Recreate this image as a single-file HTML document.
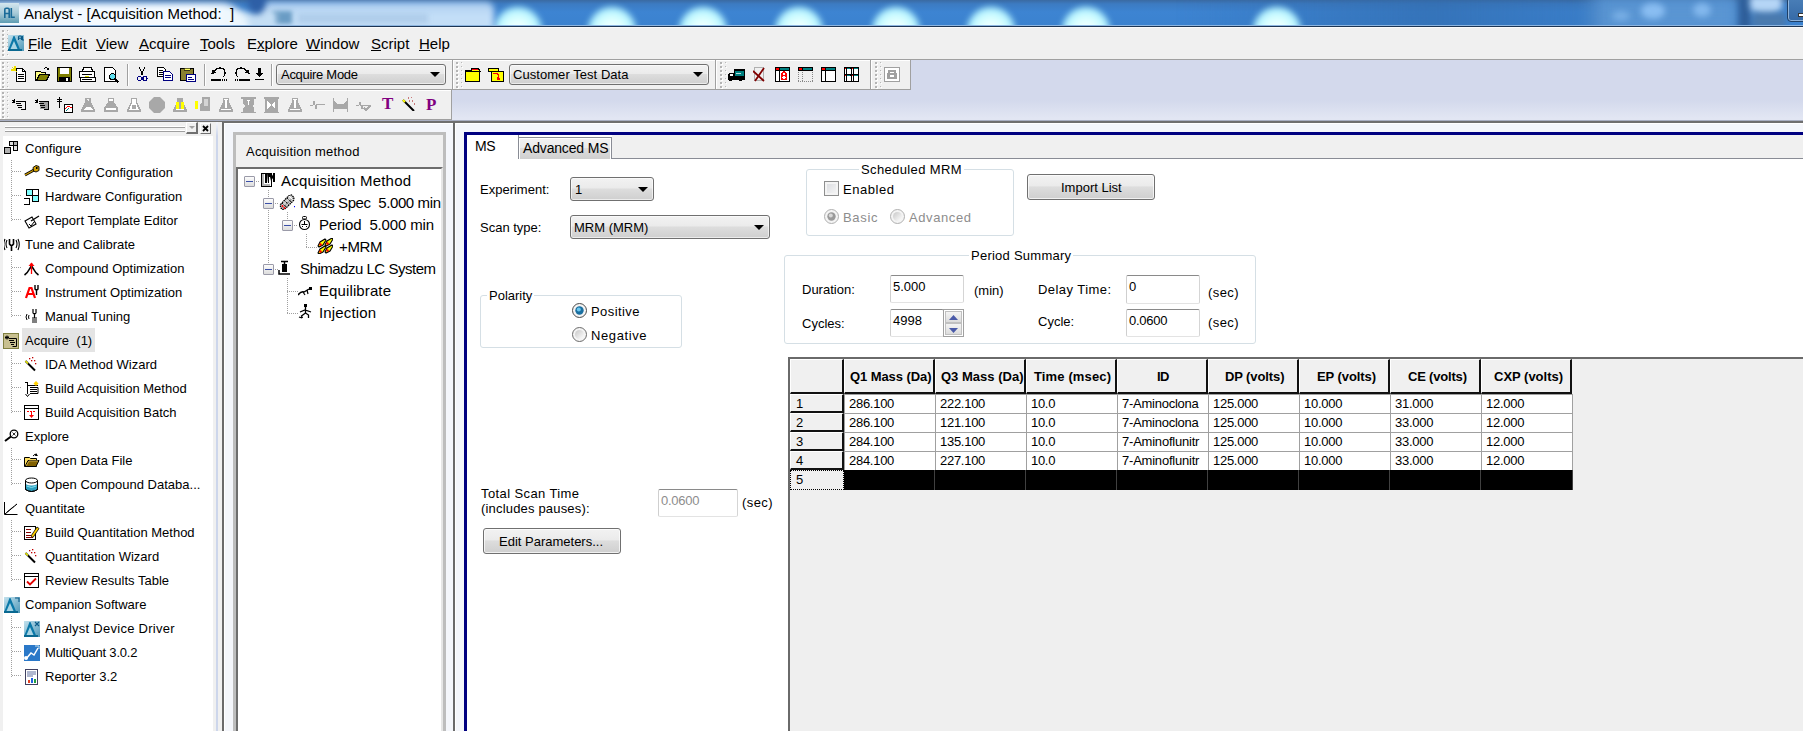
<!DOCTYPE html><html><head><meta charset="utf-8"><style>
html,body{margin:0;padding:0;}
body{width:1803px;height:731px;overflow:hidden;position:relative;background:#f0f0f0;font-family:"Liberation Sans",sans-serif;}
.t{position:absolute;white-space:pre;}
.r{position:absolute;box-sizing:border-box;}
u{text-decoration:underline;text-decoration-thickness:1px;text-underline-offset:1px;}
</style></head><body>
<div class="r" style="left:0;top:0;width:1803px;height:26px;overflow:hidden;background:linear-gradient(#3a6aa2 0px,#3c7bc2 4px,#3d84d2 12px,#3b82cf 25px);">
<div class="r" style="left:1590px;top:-5px;width:150px;height:40px;background:#5a95d2;filter:blur(8px);"></div>
<div class="r" style="left:1180px;top:-5px;width:420px;height:40px;background:linear-gradient(90deg,rgba(48,110,180,0),rgba(48,105,170,.6) 60%,rgba(48,105,170,.2));filter:blur(6px);"></div>
<div class="r" style="left:1738px;top:-5px;width:14px;height:40px;background:#2f5f9a;filter:blur(3px);"></div>
<div class="r" style="left:1750px;top:-4px;width:32px;height:20px;border-radius:0 0 50% 50%;background:#b6d6f6;filter:blur(3px);"></div>
<div class="r" style="left:1752px;top:12px;width:34px;height:16px;background:#4a7aae;filter:blur(3px);"></div>
<div class="r" style="left:1612px;top:11px;width:18px;height:10px;border-radius:50%;background:rgba(150,200,250,0.5);filter:blur(3px);"></div>
<div class="r" style="left:1641px;top:3px;width:24px;height:16px;border-radius:50%;background:rgba(150,200,250,0.8);filter:blur(3px);"></div>
<div class="r" style="left:1693px;top:3px;width:18px;height:14px;border-radius:50%;background:rgba(150,200,250,0.7);filter:blur(3px);"></div>
<div class="r" style="left:494px;top:7px;width:48px;height:30px;border-radius:24px 24px 4px 4px;background:radial-gradient(ellipse at 50% 80%,#ffffff 0%,#d8ffff 40%,#a8eeff 70%,#80c8f8 100%);filter:blur(3px);"></div>
<div class="r" style="left:588px;top:7px;width:48px;height:30px;border-radius:24px 24px 4px 4px;background:radial-gradient(ellipse at 50% 80%,#ffffff 0%,#d8ffff 40%,#a8eeff 70%,#80c8f8 100%);filter:blur(3px);"></div>
<div class="r" style="left:679px;top:7px;width:48px;height:30px;border-radius:24px 24px 4px 4px;background:radial-gradient(ellipse at 50% 80%,#ffffff 0%,#d8ffff 40%,#a8eeff 70%,#80c8f8 100%);filter:blur(3px);"></div>
<div class="r" style="left:775px;top:7px;width:48px;height:30px;border-radius:24px 24px 4px 4px;background:radial-gradient(ellipse at 50% 80%,#ffffff 0%,#d8ffff 40%,#a8eeff 70%,#80c8f8 100%);filter:blur(3px);"></div>
<div class="r" style="left:872px;top:7px;width:48px;height:30px;border-radius:24px 24px 4px 4px;background:radial-gradient(ellipse at 50% 80%,#ffffff 0%,#d8ffff 40%,#a8eeff 70%,#80c8f8 100%);filter:blur(3px);"></div>
<div class="r" style="left:967px;top:7px;width:48px;height:30px;border-radius:24px 24px 4px 4px;background:radial-gradient(ellipse at 50% 80%,#ffffff 0%,#d8ffff 40%,#a8eeff 70%,#80c8f8 100%);filter:blur(3px);"></div>
<div class="r" style="left:1062px;top:7px;width:48px;height:30px;border-radius:24px 24px 4px 4px;background:radial-gradient(ellipse at 50% 80%,#ffffff 0%,#d8ffff 40%,#a8eeff 70%,#80c8f8 100%);filter:blur(3px);"></div>
<div class="r" style="left:1253px;top:7px;width:48px;height:30px;border-radius:24px 24px 4px 4px;background:radial-gradient(ellipse at 50% 80%,#ffffff 0%,#d8ffff 40%,#a8eeff 70%,#80c8f8 100%);filter:blur(3px);"></div>
<div class="r" style="left:258px;top:2px;width:236px;height:34px;border-radius:8px;background:linear-gradient(#aacbee,#c4dff8 40%,#c2def6);filter:blur(3px);"></div>
<div class="r" style="left:272px;top:11px;width:20px;height:13px;background:#6a9cc4;filter:blur(2px);"></div>
<div class="r" style="left:298px;top:14px;width:130px;height:9px;background:rgba(130,165,205,.3);filter:blur(2.5px);"></div>
<div class="r" style="left:236px;top:12px;width:40px;height:20px;background:#c4def4;filter:blur(3px);"></div>
<div class="r" style="left:248px;top:-10px;width:18px;height:24px;border-radius:0 0 50% 50%;background:#2e5fa6;filter:blur(3px);"></div>
<div class="r" style="left:-20px;top:3px;width:270px;height:40px;border-radius:10px 30px 0 0;background:linear-gradient(90deg,#cfe4f4,#f2f9ff 10%,#f6fbff 80%,#e8f4fc);filter:blur(3px);"></div>
<div class="r" style="left:0;top:3px;width:19px;height:20px;background:linear-gradient(#a6cadb,#6aa5c0);"></div>
<div class="r" style="left:0;top:3px;width:19px;height:20px;background:linear-gradient(#d4e6ee,#a8cad8 50%,#5e9cb2);"></div>
<svg class="r" style="left:0;top:0" width="20" height="24" viewBox="0 0 20 24" fill="none"><path d="M4.8 18V9.5q0-1.3 1.3-1.3h1.8q1.3 0 1.3 1.3V18M4.8 13.5h4.4" stroke="#1a6a98" stroke-width="1.6"/><path d="M11.3 8v9.3h3.5" stroke="#1a6a98" stroke-width="1.6"/></svg>
<div class="r" style="left:1787px;top:-3px;width:30px;height:25px;border:1px solid #1e3f66;border-radius:4px;box-shadow:inset 0 0 0 1px rgba(200,225,250,.6);background:linear-gradient(#4a7fb8,#3569a6);"></div>
<div class="r" style="left:1798px;top:13px;width:10px;height:4px;background:#fff;border:1px solid #333;"></div>
</div>
<div class="t" style="left:24px;top:6.30px;font-size:15px;line-height:15px;color:#000;">Analyst - [Acquisition Method:  ]</div>
<div class="r" style="left:0px;top:25px;width:1803px;height:1px;background:#8db5e0;"></div>
<div class="r" style="left:0px;top:26px;width:1803px;height:1px;background:#1d3553;"></div>
<div class="r" style="left:0px;top:27px;width:1803px;height:1px;background:#fafafa;"></div>
<div class="r" style="left:0px;top:28px;width:1803px;height:31px;background:#f0f0f0;"></div>
<div class="r" style="left:0px;top:59px;width:1803px;height:1px;background:#a0a0a0;"></div>
<div class="r" style="left:3px;top:31px;width:2px;height:2px;background:#fff;"></div>
<div class="r" style="left:2px;top:30px;width:2px;height:2px;background:#b4b4b4;"></div>
<div class="r" style="left:8px;top:31px;width:1px;height:1px;background:#fff;"></div>
<div class="r" style="left:7px;top:30px;width:1px;height:1px;background:#b8b8b8;"></div>
<div class="r" style="left:3px;top:35px;width:2px;height:2px;background:#fff;"></div>
<div class="r" style="left:2px;top:34px;width:2px;height:2px;background:#b4b4b4;"></div>
<div class="r" style="left:8px;top:35px;width:1px;height:1px;background:#fff;"></div>
<div class="r" style="left:7px;top:34px;width:1px;height:1px;background:#b8b8b8;"></div>
<div class="r" style="left:3px;top:39px;width:2px;height:2px;background:#fff;"></div>
<div class="r" style="left:2px;top:38px;width:2px;height:2px;background:#b4b4b4;"></div>
<div class="r" style="left:8px;top:39px;width:1px;height:1px;background:#fff;"></div>
<div class="r" style="left:7px;top:38px;width:1px;height:1px;background:#b8b8b8;"></div>
<div class="r" style="left:3px;top:43px;width:2px;height:2px;background:#fff;"></div>
<div class="r" style="left:2px;top:42px;width:2px;height:2px;background:#b4b4b4;"></div>
<div class="r" style="left:8px;top:43px;width:1px;height:1px;background:#fff;"></div>
<div class="r" style="left:7px;top:42px;width:1px;height:1px;background:#b8b8b8;"></div>
<div class="r" style="left:3px;top:47px;width:2px;height:2px;background:#fff;"></div>
<div class="r" style="left:2px;top:46px;width:2px;height:2px;background:#b4b4b4;"></div>
<div class="r" style="left:8px;top:47px;width:1px;height:1px;background:#fff;"></div>
<div class="r" style="left:7px;top:46px;width:1px;height:1px;background:#b8b8b8;"></div>
<div class="r" style="left:3px;top:51px;width:2px;height:2px;background:#fff;"></div>
<div class="r" style="left:2px;top:50px;width:2px;height:2px;background:#b4b4b4;"></div>
<div class="r" style="left:8px;top:51px;width:1px;height:1px;background:#fff;"></div>
<div class="r" style="left:7px;top:50px;width:1px;height:1px;background:#b8b8b8;"></div>
<div class="r" style="left:3px;top:55px;width:2px;height:2px;background:#fff;"></div>
<div class="r" style="left:2px;top:54px;width:2px;height:2px;background:#b4b4b4;"></div>
<div class="r" style="left:8px;top:55px;width:1px;height:1px;background:#fff;"></div>
<div class="r" style="left:7px;top:54px;width:1px;height:1px;background:#b8b8b8;"></div>
<svg class="r" style="left:8px;top:35px;shape-rendering:auto" width="16" height="16" viewBox="0 0 16 16" fill="none" shape-rendering="crispEdges"><defs><linearGradient id="mg" x1="0" y1="0" x2="1" y2="1"><stop offset="0" stop-color="#c4e2ee"/><stop offset="1" stop-color="#4e98b8"/></linearGradient></defs><rect x="0" y="0" width="16" height="16" fill="url(#mg)"/><path d="M0 15.5L5.5 1h1L12.5 15.5z" fill="#0a78a8"/><path d="M2.5 14L6 6l3.5 8z" fill="#a8d4e4"/><rect x="0" y="14" width="14" height="2" fill="#0a6890"/><path d="M10.5 5V2q0-1 1-1h1q1 0 1 1v3M10.5 3.2h3M14.5 1v4h1.5" stroke="#0a5a88" stroke-width="1.1"/></svg>
<div class="t" style="left:28px;top:36.30px;font-size:15px;line-height:15px;color:#000;"><u>F</u>ile</div>
<div class="t" style="left:61px;top:36.30px;font-size:15px;line-height:15px;color:#000;"><u>E</u>dit</div>
<div class="t" style="left:96px;top:36.30px;font-size:15px;line-height:15px;color:#000;"><u>V</u>iew</div>
<div class="t" style="left:139px;top:36.30px;font-size:15px;line-height:15px;color:#000;"><u>A</u>cquire</div>
<div class="t" style="left:200px;top:36.30px;font-size:15px;line-height:15px;color:#000;"><u>T</u>ools</div>
<div class="t" style="left:247px;top:36.30px;font-size:15px;line-height:15px;color:#000;">E<u>x</u>plore</div>
<div class="t" style="left:306px;top:36.30px;font-size:15px;line-height:15px;color:#000;"><u>W</u>indow</div>
<div class="t" style="left:371px;top:36.30px;font-size:15px;line-height:15px;color:#000;"><u>S</u>cript</div>
<div class="t" style="left:419px;top:36.30px;font-size:15px;line-height:15px;color:#000;"><u>H</u>elp</div>
<div class="r" style="left:0px;top:60px;width:1803px;height:60px;background:linear-gradient(#d3d9ec 0px,#d3d9ec 40px,#e2e6f3 58px);"></div>
<div class="r" style="left:0px;top:120px;width:1803px;height:1px;background:#a9afc2;"></div>
<div class="r" style="left:0px;top:121px;width:1803px;height:1px;background:#6f6f6f;"></div>
<div class="r" style="left:0px;top:60px;width:453px;height:30px;background:#f0f0f0;border-right:1px solid #a0a0a0;border-bottom:1px solid #a0a0a0;box-shadow:inset 1px 1px 0 #fff;"></div>
<div class="r" style="left:453px;top:60px;width:263px;height:30px;background:#f0f0f0;border-right:1px solid #a0a0a0;border-bottom:1px solid #a0a0a0;box-shadow:inset 1px 1px 0 #fff;"></div>
<div class="r" style="left:716px;top:60px;width:155px;height:30px;background:#f0f0f0;border-right:1px solid #a0a0a0;border-bottom:1px solid #a0a0a0;box-shadow:inset 1px 1px 0 #fff;"></div>
<div class="r" style="left:871px;top:60px;width:40px;height:30px;background:#f0f0f0;border-right:1px solid #a0a0a0;border-bottom:1px solid #a0a0a0;box-shadow:inset 1px 1px 0 #fff;"></div>
<div class="r" style="left:0px;top:90px;width:452px;height:30px;background:#f0f0f0;border-right:1px solid #a0a0a0;border-bottom:1px solid #a0a0a0;box-shadow:inset 1px 1px 0 #fff;"></div>
<div class="r" style="left:3px;top:63px;width:2px;height:2px;background:#fff;"></div>
<div class="r" style="left:2px;top:62px;width:2px;height:2px;background:#b4b4b4;"></div>
<div class="r" style="left:8px;top:63px;width:1px;height:1px;background:#fff;"></div>
<div class="r" style="left:7px;top:62px;width:1px;height:1px;background:#b8b8b8;"></div>
<div class="r" style="left:3px;top:67px;width:2px;height:2px;background:#fff;"></div>
<div class="r" style="left:2px;top:66px;width:2px;height:2px;background:#b4b4b4;"></div>
<div class="r" style="left:8px;top:67px;width:1px;height:1px;background:#fff;"></div>
<div class="r" style="left:7px;top:66px;width:1px;height:1px;background:#b8b8b8;"></div>
<div class="r" style="left:3px;top:71px;width:2px;height:2px;background:#fff;"></div>
<div class="r" style="left:2px;top:70px;width:2px;height:2px;background:#b4b4b4;"></div>
<div class="r" style="left:8px;top:71px;width:1px;height:1px;background:#fff;"></div>
<div class="r" style="left:7px;top:70px;width:1px;height:1px;background:#b8b8b8;"></div>
<div class="r" style="left:3px;top:75px;width:2px;height:2px;background:#fff;"></div>
<div class="r" style="left:2px;top:74px;width:2px;height:2px;background:#b4b4b4;"></div>
<div class="r" style="left:8px;top:75px;width:1px;height:1px;background:#fff;"></div>
<div class="r" style="left:7px;top:74px;width:1px;height:1px;background:#b8b8b8;"></div>
<div class="r" style="left:3px;top:79px;width:2px;height:2px;background:#fff;"></div>
<div class="r" style="left:2px;top:78px;width:2px;height:2px;background:#b4b4b4;"></div>
<div class="r" style="left:8px;top:79px;width:1px;height:1px;background:#fff;"></div>
<div class="r" style="left:7px;top:78px;width:1px;height:1px;background:#b8b8b8;"></div>
<div class="r" style="left:3px;top:83px;width:2px;height:2px;background:#fff;"></div>
<div class="r" style="left:2px;top:82px;width:2px;height:2px;background:#b4b4b4;"></div>
<div class="r" style="left:8px;top:83px;width:1px;height:1px;background:#fff;"></div>
<div class="r" style="left:7px;top:82px;width:1px;height:1px;background:#b8b8b8;"></div>
<div class="r" style="left:3px;top:87px;width:2px;height:2px;background:#fff;"></div>
<div class="r" style="left:2px;top:86px;width:2px;height:2px;background:#b4b4b4;"></div>
<div class="r" style="left:8px;top:87px;width:1px;height:1px;background:#fff;"></div>
<div class="r" style="left:7px;top:86px;width:1px;height:1px;background:#b8b8b8;"></div>
<div class="r" style="left:457px;top:63px;width:2px;height:2px;background:#fff;"></div>
<div class="r" style="left:456px;top:62px;width:2px;height:2px;background:#b4b4b4;"></div>
<div class="r" style="left:462px;top:63px;width:1px;height:1px;background:#fff;"></div>
<div class="r" style="left:461px;top:62px;width:1px;height:1px;background:#b8b8b8;"></div>
<div class="r" style="left:457px;top:67px;width:2px;height:2px;background:#fff;"></div>
<div class="r" style="left:456px;top:66px;width:2px;height:2px;background:#b4b4b4;"></div>
<div class="r" style="left:462px;top:67px;width:1px;height:1px;background:#fff;"></div>
<div class="r" style="left:461px;top:66px;width:1px;height:1px;background:#b8b8b8;"></div>
<div class="r" style="left:457px;top:71px;width:2px;height:2px;background:#fff;"></div>
<div class="r" style="left:456px;top:70px;width:2px;height:2px;background:#b4b4b4;"></div>
<div class="r" style="left:462px;top:71px;width:1px;height:1px;background:#fff;"></div>
<div class="r" style="left:461px;top:70px;width:1px;height:1px;background:#b8b8b8;"></div>
<div class="r" style="left:457px;top:75px;width:2px;height:2px;background:#fff;"></div>
<div class="r" style="left:456px;top:74px;width:2px;height:2px;background:#b4b4b4;"></div>
<div class="r" style="left:462px;top:75px;width:1px;height:1px;background:#fff;"></div>
<div class="r" style="left:461px;top:74px;width:1px;height:1px;background:#b8b8b8;"></div>
<div class="r" style="left:457px;top:79px;width:2px;height:2px;background:#fff;"></div>
<div class="r" style="left:456px;top:78px;width:2px;height:2px;background:#b4b4b4;"></div>
<div class="r" style="left:462px;top:79px;width:1px;height:1px;background:#fff;"></div>
<div class="r" style="left:461px;top:78px;width:1px;height:1px;background:#b8b8b8;"></div>
<div class="r" style="left:457px;top:83px;width:2px;height:2px;background:#fff;"></div>
<div class="r" style="left:456px;top:82px;width:2px;height:2px;background:#b4b4b4;"></div>
<div class="r" style="left:462px;top:83px;width:1px;height:1px;background:#fff;"></div>
<div class="r" style="left:461px;top:82px;width:1px;height:1px;background:#b8b8b8;"></div>
<div class="r" style="left:457px;top:87px;width:2px;height:2px;background:#fff;"></div>
<div class="r" style="left:456px;top:86px;width:2px;height:2px;background:#b4b4b4;"></div>
<div class="r" style="left:462px;top:87px;width:1px;height:1px;background:#fff;"></div>
<div class="r" style="left:461px;top:86px;width:1px;height:1px;background:#b8b8b8;"></div>
<div class="r" style="left:721px;top:63px;width:2px;height:2px;background:#fff;"></div>
<div class="r" style="left:720px;top:62px;width:2px;height:2px;background:#b4b4b4;"></div>
<div class="r" style="left:726px;top:63px;width:1px;height:1px;background:#fff;"></div>
<div class="r" style="left:725px;top:62px;width:1px;height:1px;background:#b8b8b8;"></div>
<div class="r" style="left:721px;top:67px;width:2px;height:2px;background:#fff;"></div>
<div class="r" style="left:720px;top:66px;width:2px;height:2px;background:#b4b4b4;"></div>
<div class="r" style="left:726px;top:67px;width:1px;height:1px;background:#fff;"></div>
<div class="r" style="left:725px;top:66px;width:1px;height:1px;background:#b8b8b8;"></div>
<div class="r" style="left:721px;top:71px;width:2px;height:2px;background:#fff;"></div>
<div class="r" style="left:720px;top:70px;width:2px;height:2px;background:#b4b4b4;"></div>
<div class="r" style="left:726px;top:71px;width:1px;height:1px;background:#fff;"></div>
<div class="r" style="left:725px;top:70px;width:1px;height:1px;background:#b8b8b8;"></div>
<div class="r" style="left:721px;top:75px;width:2px;height:2px;background:#fff;"></div>
<div class="r" style="left:720px;top:74px;width:2px;height:2px;background:#b4b4b4;"></div>
<div class="r" style="left:726px;top:75px;width:1px;height:1px;background:#fff;"></div>
<div class="r" style="left:725px;top:74px;width:1px;height:1px;background:#b8b8b8;"></div>
<div class="r" style="left:721px;top:79px;width:2px;height:2px;background:#fff;"></div>
<div class="r" style="left:720px;top:78px;width:2px;height:2px;background:#b4b4b4;"></div>
<div class="r" style="left:726px;top:79px;width:1px;height:1px;background:#fff;"></div>
<div class="r" style="left:725px;top:78px;width:1px;height:1px;background:#b8b8b8;"></div>
<div class="r" style="left:721px;top:83px;width:2px;height:2px;background:#fff;"></div>
<div class="r" style="left:720px;top:82px;width:2px;height:2px;background:#b4b4b4;"></div>
<div class="r" style="left:726px;top:83px;width:1px;height:1px;background:#fff;"></div>
<div class="r" style="left:725px;top:82px;width:1px;height:1px;background:#b8b8b8;"></div>
<div class="r" style="left:721px;top:87px;width:2px;height:2px;background:#fff;"></div>
<div class="r" style="left:720px;top:86px;width:2px;height:2px;background:#b4b4b4;"></div>
<div class="r" style="left:726px;top:87px;width:1px;height:1px;background:#fff;"></div>
<div class="r" style="left:725px;top:86px;width:1px;height:1px;background:#b8b8b8;"></div>
<div class="r" style="left:876px;top:63px;width:2px;height:2px;background:#fff;"></div>
<div class="r" style="left:875px;top:62px;width:2px;height:2px;background:#b4b4b4;"></div>
<div class="r" style="left:881px;top:63px;width:1px;height:1px;background:#fff;"></div>
<div class="r" style="left:880px;top:62px;width:1px;height:1px;background:#b8b8b8;"></div>
<div class="r" style="left:876px;top:67px;width:2px;height:2px;background:#fff;"></div>
<div class="r" style="left:875px;top:66px;width:2px;height:2px;background:#b4b4b4;"></div>
<div class="r" style="left:881px;top:67px;width:1px;height:1px;background:#fff;"></div>
<div class="r" style="left:880px;top:66px;width:1px;height:1px;background:#b8b8b8;"></div>
<div class="r" style="left:876px;top:71px;width:2px;height:2px;background:#fff;"></div>
<div class="r" style="left:875px;top:70px;width:2px;height:2px;background:#b4b4b4;"></div>
<div class="r" style="left:881px;top:71px;width:1px;height:1px;background:#fff;"></div>
<div class="r" style="left:880px;top:70px;width:1px;height:1px;background:#b8b8b8;"></div>
<div class="r" style="left:876px;top:75px;width:2px;height:2px;background:#fff;"></div>
<div class="r" style="left:875px;top:74px;width:2px;height:2px;background:#b4b4b4;"></div>
<div class="r" style="left:881px;top:75px;width:1px;height:1px;background:#fff;"></div>
<div class="r" style="left:880px;top:74px;width:1px;height:1px;background:#b8b8b8;"></div>
<div class="r" style="left:876px;top:79px;width:2px;height:2px;background:#fff;"></div>
<div class="r" style="left:875px;top:78px;width:2px;height:2px;background:#b4b4b4;"></div>
<div class="r" style="left:881px;top:79px;width:1px;height:1px;background:#fff;"></div>
<div class="r" style="left:880px;top:78px;width:1px;height:1px;background:#b8b8b8;"></div>
<div class="r" style="left:876px;top:83px;width:2px;height:2px;background:#fff;"></div>
<div class="r" style="left:875px;top:82px;width:2px;height:2px;background:#b4b4b4;"></div>
<div class="r" style="left:881px;top:83px;width:1px;height:1px;background:#fff;"></div>
<div class="r" style="left:880px;top:82px;width:1px;height:1px;background:#b8b8b8;"></div>
<div class="r" style="left:876px;top:87px;width:2px;height:2px;background:#fff;"></div>
<div class="r" style="left:875px;top:86px;width:2px;height:2px;background:#b4b4b4;"></div>
<div class="r" style="left:881px;top:87px;width:1px;height:1px;background:#fff;"></div>
<div class="r" style="left:880px;top:86px;width:1px;height:1px;background:#b8b8b8;"></div>
<div class="r" style="left:3px;top:93px;width:2px;height:2px;background:#fff;"></div>
<div class="r" style="left:2px;top:92px;width:2px;height:2px;background:#b4b4b4;"></div>
<div class="r" style="left:8px;top:93px;width:1px;height:1px;background:#fff;"></div>
<div class="r" style="left:7px;top:92px;width:1px;height:1px;background:#b8b8b8;"></div>
<div class="r" style="left:3px;top:97px;width:2px;height:2px;background:#fff;"></div>
<div class="r" style="left:2px;top:96px;width:2px;height:2px;background:#b4b4b4;"></div>
<div class="r" style="left:8px;top:97px;width:1px;height:1px;background:#fff;"></div>
<div class="r" style="left:7px;top:96px;width:1px;height:1px;background:#b8b8b8;"></div>
<div class="r" style="left:3px;top:101px;width:2px;height:2px;background:#fff;"></div>
<div class="r" style="left:2px;top:100px;width:2px;height:2px;background:#b4b4b4;"></div>
<div class="r" style="left:8px;top:101px;width:1px;height:1px;background:#fff;"></div>
<div class="r" style="left:7px;top:100px;width:1px;height:1px;background:#b8b8b8;"></div>
<div class="r" style="left:3px;top:105px;width:2px;height:2px;background:#fff;"></div>
<div class="r" style="left:2px;top:104px;width:2px;height:2px;background:#b4b4b4;"></div>
<div class="r" style="left:8px;top:105px;width:1px;height:1px;background:#fff;"></div>
<div class="r" style="left:7px;top:104px;width:1px;height:1px;background:#b8b8b8;"></div>
<div class="r" style="left:3px;top:109px;width:2px;height:2px;background:#fff;"></div>
<div class="r" style="left:2px;top:108px;width:2px;height:2px;background:#b4b4b4;"></div>
<div class="r" style="left:8px;top:109px;width:1px;height:1px;background:#fff;"></div>
<div class="r" style="left:7px;top:108px;width:1px;height:1px;background:#b8b8b8;"></div>
<div class="r" style="left:3px;top:113px;width:2px;height:2px;background:#fff;"></div>
<div class="r" style="left:2px;top:112px;width:2px;height:2px;background:#b4b4b4;"></div>
<div class="r" style="left:8px;top:113px;width:1px;height:1px;background:#fff;"></div>
<div class="r" style="left:7px;top:112px;width:1px;height:1px;background:#b8b8b8;"></div>
<div class="r" style="left:3px;top:117px;width:2px;height:2px;background:#fff;"></div>
<div class="r" style="left:2px;top:116px;width:2px;height:2px;background:#b4b4b4;"></div>
<div class="r" style="left:8px;top:117px;width:1px;height:1px;background:#fff;"></div>
<div class="r" style="left:7px;top:116px;width:1px;height:1px;background:#b8b8b8;"></div>
<svg class="r" style="left:11px;top:66px;" width="18" height="17" viewBox="0 0 18 17" fill="none" shape-rendering="crispEdges"><path d="M5.5 2.5h6l3 3v10h-9z" fill="#fff" stroke="#000"/><path d="M11.5 2.5v3h3" fill="none" stroke="#000"/><path d="M7 8h6M7 10h6M7 12h6" stroke="#000"/><path d="M1 1l5 5M4 0v5M0 4h5" stroke="#f0e000" stroke-width="1.2"/></svg>
<svg class="r" style="left:34px;top:66px;" width="17" height="16" viewBox="0 0 17 16" fill="none" shape-rendering="crispEdges"><path d="M1.5 5.5h5l1 1h4v8h-10z" fill="#fcfc80" stroke="#000"/><path d="M2.5 14.5l3-6h10l-3 6z" fill="#808000" stroke="#000"/><path d="M10 3q3-3 5 1" fill="none" stroke="#000"/><path d="M14 2l1 2h-2z" fill="#000"/></svg>
<svg class="r" style="left:57px;top:67px;" width="15" height="15" viewBox="0 0 15 15" fill="none" shape-rendering="crispEdges"><rect x=".5" y=".5" width="14" height="14" fill="#808000" stroke="#000"/><rect x="3" y="1" width="9" height="6" fill="#fff"/><rect x="2" y="10" width="11" height="5" fill="#000"/><rect x="9" y="11" width="2" height="3" fill="#fff"/></svg>
<svg class="r" style="left:79px;top:67px;" width="17" height="15" viewBox="0 0 17 15" fill="none" shape-rendering="crispEdges"><path d="M4.5 .5h8l1 4h-10z" fill="#fff" stroke="#000"/><rect x=".5" y="4.5" width="15" height="6" fill="#fff" stroke="#000"/><rect x="1" y="10" width="15" height="4" fill="#fff" stroke="#000"/><rect x="6" y="9" width="4" height="1" fill="#e0e000"/><path d="M3 7h10M3 12h10" stroke="#000"/></svg>
<svg class="r" style="left:104px;top:67px;" width="16" height="16" viewBox="0 0 16 16" fill="none" shape-rendering="crispEdges"><path d="M.5 .5h8l3 3v11h-11z" fill="#fff" stroke="#000"/><circle cx="8.5" cy="9.5" r="3" fill="#60e0f0" stroke="#000"/><path d="M10.5 11.5l4 4" stroke="#000" stroke-width="1.5"/></svg>
<div class="r" style="left:127px;top:64px;width:1px;height:22px;background:#a0a0a0;"></div>
<div class="r" style="left:128px;top:64px;width:1px;height:22px;background:#fff;"></div>
<svg class="r" style="left:137px;top:67px;" width="11" height="15" viewBox="0 0 11 15" fill="none" shape-rendering="crispEdges"><path d="M2 0l4 8M8 0l-4 8" stroke="#000"/><circle cx="2.5" cy="11.5" r="2" fill="none" stroke="#000080" stroke-width="1.3"/><circle cx="8" cy="11.5" r="2" fill="none" stroke="#000080" stroke-width="1.3"/></svg>
<svg class="r" style="left:157px;top:67px;" width="17" height="14" viewBox="0 0 17 14" fill="none" shape-rendering="crispEdges"><path d="M.5 .5h6l2 2v7h-8z" fill="#fff" stroke="#000"/><path d="M2 3h4M2 5h5M2 7h5" stroke="#000"/><path d="M6.5 4.5h6l3 3v6h-9z" fill="#fff" stroke="#000080"/><path d="M8 8h6M8 10h6" stroke="#000080"/></svg>
<svg class="r" style="left:180px;top:67px;" width="17" height="15" viewBox="0 0 17 15" fill="none" shape-rendering="crispEdges"><rect x=".5" y="1.5" width="13" height="12" rx="1" fill="#8a8030" stroke="#000"/><path d="M4 1h6v2h-6z" fill="#ffff60" stroke="#000" stroke-width=".6"/><rect x="6.5" y="7.5" width="9" height="7" fill="#fff" stroke="#000080"/><path d="M8 10h4M8 12h6" stroke="#000080"/></svg>
<div class="r" style="left:204px;top:64px;width:1px;height:22px;background:#a0a0a0;"></div>
<div class="r" style="left:205px;top:64px;width:1px;height:22px;background:#fff;"></div>
<svg class="r" style="left:211px;top:67px;" width="17" height="14" viewBox="0 0 17 14" fill="none" shape-rendering="crispEdges"><path d="M3 6 Q4 1 9 1 Q14 1 14 6 Q14 9 12 10" fill="none" stroke="#000" stroke-width="1.3"/><path d="M0 7l5-1l-3-4z" fill="#000"/><rect x="0" y="12" width="10" height="2" fill="#000"/><path d="M11 12v2M13 12v2M15 12v2" stroke="#000"/></svg>
<svg class="r" style="left:233px;top:67px;" width="17" height="14" viewBox="0 0 17 14" fill="none" shape-rendering="crispEdges"><path d="M14 6 Q13 1 8 1 Q3 1 3 6 Q3 9 5 10" fill="none" stroke="#000" stroke-width="1.3"/><path d="M17 7l-5-1l3-4z" fill="#000"/><rect x="7" y="12" width="10" height="2" fill="#000"/><path d="M2 12v2M4 12v2M6 12v2" stroke="#000"/></svg>
<svg class="r" style="left:255px;top:68px;" width="9" height="12" viewBox="0 0 9 12" fill="none" shape-rendering="crispEdges"><rect x="3" y="0" width="3" height="5" fill="#000"/><path d="M0 5h9l-4.5 4z" fill="#000"/><rect x="0" y="11" width="9" height="1" fill="#000"/></svg>
<div class="r" style="left:271px;top:64px;width:1px;height:22px;background:#a0a0a0;"></div>
<div class="r" style="left:272px;top:64px;width:1px;height:22px;background:#fff;"></div>
<div class="r" style="left:276px;top:64px;width:170px;height:21px;border:1px solid #707070;border-radius:3px;background:linear-gradient(#f2f2f2 0%,#ebebeb 45%,#dddddd 50%,#cfcfcf 100%);box-shadow:inset 0 0 0 1px rgba(255,255,255,.6);"></div>
<svg class="r" style="left:430px;top:72px;shape-rendering:auto" width="10" height="6" viewBox="0 0 10 6" fill="none" shape-rendering="crispEdges"><path d="M0 0h10l-5 5z" fill="#000"/></svg>
<div class="t" style="left:281px;top:68.40px;font-size:13px;line-height:13px;color:#000;letter-spacing:-0.292px;">Acquire Mode</div>
<svg class="r" style="left:465px;top:67px;" width="16" height="15" viewBox="0 0 16 15" fill="none" shape-rendering="crispEdges"><path d="M.5 3.5h6v-2h7l1 2v11h-14z" fill="#ffff00" stroke="#000"/><path d="M7 2h6" stroke="#f00"/><path d="M.5 4.5h15" stroke="#000"/></svg>
<svg class="r" style="left:488px;top:67px;" width="16" height="15" viewBox="0 0 16 15" fill="none" shape-rendering="crispEdges"><path d="M.5 1.5h10v3h-10z" fill="#ffff00" stroke="#000"/><path d="M3.5 4.5h12v10h-12z" fill="#ffff00" stroke="#000"/><path d="M5 7q5-2 6 2l-2 3M9 12h3" fill="none" stroke="#f00" stroke-width="1.2"/></svg>
<div class="r" style="left:509px;top:64px;width:200px;height:21px;border:1px solid #707070;border-radius:3px;background:linear-gradient(#f2f2f2 0%,#ebebeb 45%,#dddddd 50%,#cfcfcf 100%);box-shadow:inset 0 0 0 1px rgba(255,255,255,.6);"></div>
<svg class="r" style="left:693px;top:72px;shape-rendering:auto" width="10" height="6" viewBox="0 0 10 6" fill="none" shape-rendering="crispEdges"><path d="M0 0h10l-5 5z" fill="#000"/></svg>
<div class="t" style="left:513px;top:68.30px;font-size:13px;line-height:13px;color:#000;letter-spacing:0.051px;">Customer Test Data</div>
<svg class="r" style="left:728px;top:69px;" width="18" height="13" viewBox="0 0 18 13" fill="none" shape-rendering="crispEdges"><rect x="6" y="0" width="11" height="9" fill="#000"/><rect x="7" y="2" width="9" height="5" fill="#008080"/><path d="M8 4h5" stroke="#bfe0e0"/><path d="M1 4h5v5h-6v-3z" fill="#000"/><rect x="2" y="5" width="3" height="2" fill="#fff"/><rect x="0" y="9" width="17" height="2" fill="#000"/><circle cx="2.5" cy="11" r="1.5" fill="#000"/><circle cx="12.5" cy="11" r="1.5" fill="#000"/></svg>
<svg class="r" style="left:753px;top:67px;shape-rendering:auto" width="12" height="15" viewBox="0 0 12 15" fill="none" shape-rendering="crispEdges"><rect x="1.5" y=".5" width="9" height="13" fill="none" stroke="#b0b0b0"/><path d="M0 4l11 10M11 1l-9 13" stroke="#800000" stroke-width="1.8"/></svg>
<svg class="r" style="left:775px;top:67px;" width="16" height="16" viewBox="0 0 16 16" fill="none" shape-rendering="crispEdges"><rect x=".5" y=".5" width="14" height="14" fill="#fff" stroke="#000"/><rect x="0" y="0" width="15" height="4" fill="#000"/><rect x="1" y="1" width="3" height="2" fill="#f00"/><rect x="5" y="1" width="9" height="2" fill="#008080"/><rect x="4" y="4" width="1" height="11" fill="#000"/><path d="M7 8v-2l1-1h2l1 1v2" stroke="#f00" stroke-width="1.2"/><rect x="6" y="8" width="6" height="5" fill="#f00"/><rect x="8" y="9" width="2" height="3" fill="#fff"/><rect x="7" y="10" width="4" height="1" fill="#fff"/></svg>
<svg class="r" style="left:798px;top:67px;" width="16" height="16" viewBox="0 0 16 16" fill="none" shape-rendering="crispEdges"><rect x="0" y="0" width="15" height="4" fill="#000"/><rect x="1" y="1" width="3" height="2" fill="#f00"/><rect x="5" y="1" width="9" height="2" fill="#008080"/><path d="M.5 5v10M4.5 5v10M14.5 5v10M0 14.5h15" stroke="#888" stroke-dasharray="1 1"/></svg>
<svg class="r" style="left:821px;top:67px;" width="16" height="16" viewBox="0 0 16 16" fill="none" shape-rendering="crispEdges"><rect x=".5" y=".5" width="14" height="14" fill="#fff" stroke="#000"/><rect x="0" y="0" width="15" height="4" fill="#000"/><rect x="1" y="1" width="3" height="2" fill="#f00"/><rect x="5" y="1" width="9" height="2" fill="#008080"/><rect x="4" y="4" width="1" height="11" fill="#000"/></svg>
<svg class="r" style="left:844px;top:67px;" width="16" height="16" viewBox="0 0 16 16" fill="none" shape-rendering="crispEdges"><rect x=".5" y=".5" width="14" height="14" fill="#fff" stroke="#000"/><rect x="0" y="0" width="15" height="2" fill="#000"/><rect x="0" y="7" width="15" height="2" fill="#000"/><rect x="7" y="0" width="1" height="15" fill="#000"/><rect x="2" y="2" width="1" height="5" fill="#000"/><rect x="9" y="2" width="1" height="5" fill="#000"/><rect x="2" y="9" width="1" height="5" fill="#000"/><rect x="9" y="9" width="1" height="5" fill="#000"/><rect x="1" y="1" width="1" height="1" fill="#f00"/><rect x="8" y="1" width="1" height="1" fill="#f00"/><rect x="1" y="8" width="1" height="1" fill="#f00"/><rect x="8" y="8" width="1" height="1" fill="#f00"/><rect x="3" y="1" width="3" height="1" fill="#008080"/><rect x="10" y="1" width="4" height="1" fill="#008080"/><rect x="3" y="8" width="3" height="1" fill="#008080"/><rect x="10" y="8" width="4" height="1" fill="#008080"/></svg>
<svg class="r" style="left:884px;top:67px;" width="16" height="15" viewBox="0 0 16 15" fill="none" shape-rendering="crispEdges"><rect x=".5" y=".5" width="15" height="14" fill="#fff" stroke="#a0a0a0"/><path d="M5 6v-2h6v2" fill="none" stroke="#a0a0a0" stroke-width="1.2"/><rect x="3" y="6" width="10" height="6" fill="#a0a0a0"/><rect x="6" y="8" width="4" height="2" fill="#fff"/></svg>
<svg class="r" style="left:12px;top:99px;" width="15" height="12" viewBox="0 0 15 12" fill="none" shape-rendering="crispEdges"><path d="M0 1l3 2M2 0v3M0 3h3" stroke="#000" fill="none"/><path d="M4 2.5h9.5v8h-5M4 4.5h5M5 6.5h5M6 8.5h4" stroke="#000" fill="none"/></svg>
<svg class="r" style="left:35px;top:99px;" width="15" height="12" viewBox="0 0 15 12" fill="none" shape-rendering="crispEdges"><path d="M0 1l3 2M2 0v3M0 3h3" stroke="#000"/><rect x="5" y="2" width="9" height="8" fill="#a0a0a0"/><path d="M4 2.5h9.5v8h-5M4 4.5h5M5 6.5h5M6 8.5h4" stroke="#000" fill="none"/></svg>
<svg class="r" style="left:57px;top:97px;" width="16" height="16" viewBox="0 0 16 16" fill="none" shape-rendering="crispEdges"><path d="M2 0v11M0 2h5M0 4h5" stroke="#000"/><rect x="7.5" y="7.5" width="8" height="8" fill="#fff" stroke="#000"/><path d="M8 12l3-3l4 2" stroke="#f00" fill="none"/><path d="M9 14l3-3" stroke="#008080"/></svg>
<svg class="r" style="left:80px;top:97px;" width="16" height="16" viewBox="0 0 16 16" fill="none" shape-rendering="crispEdges"><path d="M5 1h6v4l4 8v2h-14v-2l4-8z" fill="#a8a8a8"/><path d="M6 2h3v3z" fill="#f0f0f0"/><path d="M4 13l2-3h5l2 3z" fill="#fff"/></svg>
<svg class="r" style="left:103px;top:97px;" width="16" height="16" viewBox="0 0 16 16" fill="none" shape-rendering="crispEdges"><path d="M5 1h6v4l4 6v4h-14v-4l4-6z" fill="#a8a8a8"/><rect x="6" y="2" width="4" height="2" fill="#fff"/><rect x="3" y="11" width="10" height="2" fill="#fff"/></svg>
<svg class="r" style="left:126px;top:97px;" width="16" height="16" viewBox="0 0 16 16" fill="none" shape-rendering="crispEdges"><path d="M5 1h6v4l4 8v2h-14v-2l4-8z" fill="#a8a8a8"/><path d="M6 2h4v4l3 7h-10l3-7z" fill="#fff"/><circle cx="8" cy="10" r="2.5" fill="#a8a8a8"/></svg>
<svg class="r" style="left:149px;top:97px;shape-rendering:auto" width="16" height="16" viewBox="0 0 16 16" fill="none" shape-rendering="crispEdges"><path d="M5 0h6l5 5v6l-5 5h-6l-5-5v-6z" fill="#a8a8a8"/></svg>
<svg class="r" style="left:172px;top:97px;" width="16" height="16" viewBox="0 0 16 16" fill="none" shape-rendering="crispEdges"><path d="M5 1h6v4l4 8v2h-14v-2l4-8z" fill="#a8a8a8"/><rect x="4" y="5" width="3" height="7" fill="#ffff00"/><rect x="9" y="5" width="3" height="7" fill="#ffff00"/><rect x="4" y="12" width="8" height="1" fill="#fff"/></svg>
<svg class="r" style="left:195px;top:97px;" width="16" height="16" viewBox="0 0 16 16" fill="none" shape-rendering="crispEdges"><rect x="0" y="4" width="3" height="8" fill="#ffff00"/><path d="M7 0h8v14h-10v-7l2-2z" fill="#a8a8a8"/><path d="M9 2h4v7h-4z" fill="#fff" opacity=".5"/></svg>
<svg class="r" style="left:218px;top:97px;" width="16" height="16" viewBox="0 0 16 16" fill="none" shape-rendering="crispEdges"><path d="M5 1h6v4l4 8v2h-14v-2l4-8z" fill="#a8a8a8"/><path d="M6 2h4v1h-1v8h-2v-8h-1z" fill="#fff"/><rect x="3" y="12" width="10" height="1" fill="#fff"/></svg>
<svg class="r" style="left:241px;top:97px;" width="16" height="16" viewBox="0 0 16 16" fill="none" shape-rendering="crispEdges"><rect x="0" y="0" width="15" height="2" fill="#a8a8a8"/><path d="M2 2h11v5l-2 2l2 2v4h-11v-4l2-2l-2-2z" fill="#a8a8a8"/><path d="M6 3h3v1h-1v4h-1v-4h-1z" fill="#fff"/><rect x="0" y="15" width="15" height="1" fill="#a8a8a8"/></svg>
<svg class="r" style="left:264px;top:97px;" width="16" height="16" viewBox="0 0 16 16" fill="none" shape-rendering="crispEdges"><rect x="0" y="0" width="15" height="2" fill="#a8a8a8"/><rect x="1" y="2" width="13" height="13" fill="#a8a8a8"/><path d="M3 4l4 4l4-4v8l-4-4l-4 4z" fill="#fff"/><rect x="0" y="15" width="15" height="1" fill="#a8a8a8"/></svg>
<svg class="r" style="left:287px;top:97px;" width="16" height="16" viewBox="0 0 16 16" fill="none" shape-rendering="crispEdges"><path d="M5 1h6v4l4 8v2h-14v-2l4-8z" fill="#a8a8a8"/><path d="M6 2h4v1h-1v8h-2v-8h-1z" fill="#fff"/><rect x="3" y="12" width="10" height="1" fill="#fff"/></svg>
<svg class="r" style="left:310px;top:97px;" width="16" height="16" viewBox="0 0 16 16" fill="none" shape-rendering="crispEdges"><path d="M0 8h3l1-4l2 8l1-5h8" fill="none" stroke="#a8a8a8"/></svg>
<svg class="r" style="left:333px;top:97px;" width="16" height="16" viewBox="0 0 16 16" fill="none" shape-rendering="crispEdges"><path d="M.5 1v14M14.5 1v14" stroke="#a8a8a8"/><path d="M1 4l4 3h5l4-3v8h-13z" fill="#a8a8a8"/></svg>
<svg class="r" style="left:356px;top:97px;" width="16" height="16" viewBox="0 0 16 16" fill="none" shape-rendering="crispEdges"><path d="M0 8h3l1-3l2 7l1-4h8" fill="none" stroke="#a8a8a8"/><path d="M8 11l2 2l4-4" fill="none" stroke="#a8a8a8" stroke-width="1.5"/></svg>
<div class="t" style="left:382px;top:95px;font-family:'Liberation Serif',serif;font-weight:bold;font-size:17px;line-height:18px;color:#800080;">T</div>
<svg class="r" style="left:402px;top:97px;shape-rendering:auto" width="14" height="14" viewBox="0 0 14 14" fill="none" shape-rendering="crispEdges"><path d="M1 3l11 11" stroke="#000" stroke-width="2"/><path d="M1 3l2 2" stroke="#ff0" stroke-width="2"/><path d="M6 1h1M9 0h1M10 4h1M12 7h1M7 4h1" stroke="#a00000"/></svg>
<div class="t" style="left:426px;top:96px;font-family:'Liberation Serif',serif;font-weight:bold;font-size:17px;line-height:18px;color:#800080;">P</div>
<div class="r" style="left:0px;top:122px;width:222px;height:609px;background:#f0f0f0;"></div>
<div class="r" style="left:5px;top:126px;width:180px;height:1px;background:#fff;"></div>
<div class="r" style="left:5px;top:127px;width:180px;height:1px;background:#a0a0a0;"></div>
<div class="r" style="left:5px;top:130px;width:180px;height:1px;background:#fff;"></div>
<div class="r" style="left:5px;top:131px;width:180px;height:1px;background:#a0a0a0;"></div>
<div class="r" style="left:186px;top:122px;width:12px;height:12px;background:#f0f0f0;border-top:1px solid #fff;border-left:1px solid #fff;border-right:2px solid #707070;border-bottom:2px solid #707070;"></div>
<svg class="r" style="left:189px;top:126px;shape-rendering:auto" width="6" height="4" viewBox="0 0 6 4" fill="none" shape-rendering="crispEdges"><path d="M0 0h6l-3 3z" fill="#a0a0a0"/></svg>
<div class="r" style="left:200px;top:123px;width:11px;height:11px;background:#f0f0f0;border-top:1px solid #fff;border-left:1px solid #fff;border-right:1px solid #707070;border-bottom:1px solid #707070;"></div>
<svg class="r" style="left:202px;top:125px;shape-rendering:auto" width="7" height="7" viewBox="0 0 7 7" fill="none" shape-rendering="crispEdges"><path d="M1 1l5 5M6 1l-5 5" stroke="#000" stroke-width="1.8"/></svg>
<div class="r" style="left:3px;top:136px;width:210px;height:595px;background:#fff;"></div>
<div class="r" style="left:216px;top:122px;width:2px;height:609px;background:linear-gradient(#f4f6fb 0px,#cdd6eb 14px,#cdd6eb 100%);"></div>
<div class="r" style="left:11px;top:160px;width:1px;height:61px;background:repeating-linear-gradient(#a0a0a0 0 1px,transparent 1px 2px);"></div>
<div class="r" style="left:11px;top:256px;width:1px;height:61px;background:repeating-linear-gradient(#a0a0a0 0 1px,transparent 1px 2px);"></div>
<div class="r" style="left:11px;top:352px;width:1px;height:61px;background:repeating-linear-gradient(#a0a0a0 0 1px,transparent 1px 2px);"></div>
<div class="r" style="left:11px;top:448px;width:1px;height:37px;background:repeating-linear-gradient(#a0a0a0 0 1px,transparent 1px 2px);"></div>
<div class="r" style="left:11px;top:520px;width:1px;height:61px;background:repeating-linear-gradient(#a0a0a0 0 1px,transparent 1px 2px);"></div>
<div class="r" style="left:11px;top:616px;width:1px;height:61px;background:repeating-linear-gradient(#a0a0a0 0 1px,transparent 1px 2px);"></div>
<svg class="r" style="left:4px;top:141px;shape-rendering:auto" width="16" height="16" viewBox="0 0 16 16" fill="none" shape-rendering="crispEdges"><rect x="5.5" y=".5" width="4" height="4" fill="#e0e0e0" stroke="#000"/><rect x="9.5" y=".5" width="4" height="4" fill="#b0b0b0" stroke="#000"/><rect x="9.5" y="4.5" width="4" height="5" fill="#e0e0e0" stroke="#000"/><rect x=".5" y="6.5" width="6" height="6" fill="#b0b0b0" stroke="#000"/></svg>
<div class="t" style="left:25px;top:141.50px;font-size:13px;line-height:13px;color:#000;">Configure</div>
<div class="r" style="left:12px;top:171px;width:10px;height:1px;background:repeating-linear-gradient(90deg,#a0a0a0 0 1px,transparent 1px 2px);"></div>
<svg class="r" style="left:24px;top:165px;shape-rendering:auto" width="16" height="16" viewBox="0 0 16 16" fill="none" shape-rendering="crispEdges"><path d="M1 10l9-5" stroke="#000" stroke-width="2.6"/><path d="M1 10l9-5" stroke="#d4a000" stroke-width="1.2"/><path d="M9 2.5l3-2l3 1v4l-3 1.5l-2.5-1z" fill="#d4a000" stroke="#000" stroke-width=".9"/><rect x="12" y="2" width="1.5" height="2" fill="#000"/></svg>
<div class="t" style="left:45px;top:165.50px;font-size:13px;line-height:13px;color:#000;">Security Configuration</div>
<div class="r" style="left:12px;top:195px;width:10px;height:1px;background:repeating-linear-gradient(90deg,#a0a0a0 0 1px,transparent 1px 2px);"></div>
<svg class="r" style="left:24px;top:189px;shape-rendering:auto" width="16" height="16" viewBox="0 0 16 16" fill="none" shape-rendering="crispEdges"><rect x="2.5" y=".5" width="6" height="6" fill="#80ffff" stroke="#000"/><rect x="8.5" y=".5" width="6" height="6" fill="#fff" stroke="#000"/><rect x="8.5" y="6.5" width="6" height="6" fill="#80ffff" stroke="#000"/><rect x="-.5" y="9.5" width="6" height="6" fill="#fff" stroke="#000"/></svg>
<div class="t" style="left:45px;top:189.50px;font-size:13px;line-height:13px;color:#000;">Hardware Configuration</div>
<div class="r" style="left:12px;top:219px;width:10px;height:1px;background:repeating-linear-gradient(90deg,#a0a0a0 0 1px,transparent 1px 2px);"></div>
<svg class="r" style="left:24px;top:213px;shape-rendering:auto" width="16" height="16" viewBox="0 0 16 16" fill="none" shape-rendering="crispEdges"><path d="M1 8l7-4l4 7l-7 4z" fill="#fff" stroke="#000" stroke-width="1.1"/><path d="M5 11l2 2l3-4" stroke="#000"/><path d="M7 8l8-5" stroke="#000" stroke-width="1.3"/></svg>
<div class="t" style="left:45px;top:213.50px;font-size:13px;line-height:13px;color:#000;">Report Template Editor</div>
<svg class="r" style="left:4px;top:237px;shape-rendering:auto" width="16" height="16" viewBox="0 0 16 16" fill="none" shape-rendering="crispEdges"><path d="M3 3q-2 4 0 8M1 2q-2.5 5.5 0 11M12 3q2 4 0 8M14 2q2.5 5.5 0 11" stroke="#000" stroke-width="1.1"/><path d="M5.5 2v5q2 3 4 0v-5M7.5 8v6" stroke="#000" stroke-width="1.6"/></svg>
<div class="t" style="left:25px;top:237.50px;font-size:13px;line-height:13px;color:#000;">Tune and Calibrate</div>
<div class="r" style="left:12px;top:267px;width:10px;height:1px;background:repeating-linear-gradient(90deg,#a0a0a0 0 1px,transparent 1px 2px);"></div>
<svg class="r" style="left:24px;top:261px;shape-rendering:auto" width="16" height="16" viewBox="0 0 16 16" fill="none" shape-rendering="crispEdges"><path d="M.5 14q3-2 5-6l2-3l2 3q2 4 5 6" stroke="#000" stroke-width="1.6"/><path d="M7.5 2v11" stroke="#f00" stroke-width="1.3"/><path d="M4.5 5l3-3.5l3 3.5z" fill="#f00"/></svg>
<div class="t" style="left:45px;top:261.50px;font-size:13px;line-height:13px;color:#000;">Compound Optimization</div>
<div class="r" style="left:12px;top:291px;width:10px;height:1px;background:repeating-linear-gradient(90deg,#a0a0a0 0 1px,transparent 1px 2px);"></div>
<svg class="r" style="left:24px;top:285px;shape-rendering:auto" width="16" height="16" viewBox="0 0 16 16" fill="none" shape-rendering="crispEdges"><path d="M2 13l3.5-10h2l3.5 10M3.5 9h6" stroke="#f00" stroke-width="2.2"/><path d="M11 0v4q1.5 2 3 0v-4M12.5 4v6" stroke="#000" stroke-width="1.4"/></svg>
<div class="t" style="left:45px;top:285.50px;font-size:13px;line-height:13px;color:#000;">Instrument Optimization</div>
<div class="r" style="left:12px;top:315px;width:10px;height:1px;background:repeating-linear-gradient(90deg,#a0a0a0 0 1px,transparent 1px 2px);"></div>
<svg class="r" style="left:24px;top:309px;shape-rendering:auto" width="16" height="16" viewBox="0 0 16 16" fill="none" shape-rendering="crispEdges"><path d="M3 5q-2 3 0 6M5 6q-1 2 0 4" stroke="#000"/><path d="M9 0v4q1.5 2 3 0v-4M10.5 4v5M8 9h5M8 11h5M8 13h5" stroke="#000" stroke-width="1.2"/></svg>
<div class="t" style="left:45px;top:309.50px;font-size:13px;line-height:13px;color:#000;">Manual Tuning</div>
<div class="r" style="left:22px;top:328px;width:73px;height:24px;background:#e4e4e4;"></div>
<svg class="r" style="left:3px;top:333px;shape-rendering:auto" width="16" height="16" viewBox="0 0 16 16" fill="none" shape-rendering="crispEdges"><rect x=".5" y=".5" width="15" height="15" fill="#c8c090" stroke="#808040"/><path d="M2.5 3l3 3M5.5 3l-3 3M4 2.5v4M2 4.5h4" stroke="#000"/><path d="M6 5.5h7.5v8h-4M6 7.5h5M7 9.5h5M8 11.5h3" stroke="#000"/></svg>
<div class="t" style="left:25px;top:333.50px;font-size:13px;line-height:13px;color:#000;">Acquire  (1)</div>
<div class="r" style="left:12px;top:363px;width:10px;height:1px;background:repeating-linear-gradient(90deg,#a0a0a0 0 1px,transparent 1px 2px);"></div>
<svg class="r" style="left:24px;top:357px;shape-rendering:auto" width="16" height="16" viewBox="0 0 16 16" fill="none" shape-rendering="crispEdges"><path d="M1.5 4l9.5 9.5" stroke="#000" stroke-width="2"/><path d="M1.5 4l2.5 2.5" stroke="#ff0" stroke-width="1.2"/><rect x="5" y="1" width="1.3" height="1.3" fill="#c00000"/><rect x="8" y="0" width="1.3" height="1.3" fill="#c00000"/><rect x="7" y="3" width="1.3" height="1.3" fill="#c00000"/><rect x="10" y="3" width="1.3" height="1.3" fill="#c00000"/><rect x="11" y="6" width="1.3" height="1.3" fill="#c00000"/></svg>
<div class="t" style="left:45px;top:357.50px;font-size:13px;line-height:13px;color:#000;">IDA Method Wizard</div>
<div class="r" style="left:12px;top:387px;width:10px;height:1px;background:repeating-linear-gradient(90deg,#a0a0a0 0 1px,transparent 1px 2px);"></div>
<svg class="r" style="left:24px;top:381px;shape-rendering:auto" width="16" height="16" viewBox="0 0 16 16" fill="none" shape-rendering="crispEdges"><path d="M1 1.5h3M3.5 1v12M1.5 13l2 2.5l2-2.5M4 4.5h10M6 6.5h8v6h-8M6 8.5h7M6 10.5h7" stroke="#000"/><path d="M12 0l2.5 2.5l-2.5 2.5l-2.5-2.5z" fill="#ffd000"/></svg>
<div class="t" style="left:45px;top:381.50px;font-size:13px;line-height:13px;color:#000;">Build Acquisition Method</div>
<div class="r" style="left:12px;top:411px;width:10px;height:1px;background:repeating-linear-gradient(90deg,#a0a0a0 0 1px,transparent 1px 2px);"></div>
<svg class="r" style="left:24px;top:405px;shape-rendering:auto" width="16" height="16" viewBox="0 0 16 16" fill="none" shape-rendering="crispEdges"><rect x=".5" y=".5" width="14" height="14" fill="#fff" stroke="#000"/><path d="M1 3.5h13" stroke="#000"/><path d="M3 6.5h9" stroke="#f00" stroke-dasharray="2 1"/><path d="M7.5 7v5" stroke="#f00"/><path d="M5 10h5l-2.5 3z" fill="#f00"/></svg>
<div class="t" style="left:45px;top:405.50px;font-size:13px;line-height:13px;color:#000;">Build Acquisition Batch</div>
<svg class="r" style="left:4px;top:429px;shape-rendering:auto" width="16" height="16" viewBox="0 0 16 16" fill="none" shape-rendering="crispEdges"><circle cx="10" cy="5" r="3.8" fill="#fff" stroke="#000" stroke-width="1.3"/><path d="M8.5 3.5l3 3M11.5 3.5l-3 3" stroke="#000" stroke-width=".8"/><path d="M1 12l6-4.5" stroke="#000" stroke-width="2"/></svg>
<div class="t" style="left:25px;top:429.50px;font-size:13px;line-height:13px;color:#000;">Explore</div>
<div class="r" style="left:12px;top:459px;width:10px;height:1px;background:repeating-linear-gradient(90deg,#a0a0a0 0 1px,transparent 1px 2px);"></div>
<svg class="r" style="left:24px;top:453px;shape-rendering:auto" width="16" height="16" viewBox="0 0 16 16" fill="none" shape-rendering="crispEdges"><path d="M.5 4.5h5l1 1h6v8h-12z" fill="#ffe060" stroke="#000"/><path d="M1 13.5l3-6h11l-3 6z" fill="#806000" stroke="#000"/><path d="M2 13l3-5h9" stroke="#c0a040"/><path d="M9 3q2-3 4-1" stroke="#000"/><path d="M12 0l2 3h-3z" fill="#000"/></svg>
<div class="t" style="left:45px;top:453.50px;font-size:13px;line-height:13px;color:#000;">Open Data File</div>
<div class="r" style="left:12px;top:483px;width:10px;height:1px;background:repeating-linear-gradient(90deg,#a0a0a0 0 1px,transparent 1px 2px);"></div>
<svg class="r" style="left:24px;top:477px;shape-rendering:auto" width="16" height="16" viewBox="0 0 16 16" fill="none" shape-rendering="crispEdges"><path d="M1.5 3.5v9q6 4 12 0v-9" fill="#30a0c0" stroke="#000"/><path d="M1.5 7q6 3 12 0v-3.5h-12z" fill="#fff"/><ellipse cx="7.5" cy="3.5" rx="6" ry="2.5" fill="#fff" stroke="#000"/><path d="M1.5 3.5v9q6 4 12 0v-9" stroke="#000"/><path d="M2.5 9q5 3 10 0" stroke="#80e0f0"/></svg>
<div class="t" style="left:45px;top:477.50px;font-size:13px;line-height:13px;color:#000;">Open Compound Databa...</div>
<svg class="r" style="left:4px;top:501px;shape-rendering:auto" width="16" height="16" viewBox="0 0 16 16" fill="none" shape-rendering="crispEdges"><path d="M.5 1v12.5h13" stroke="#000"/><path d="M1 13l8-7M3 11l10-8" stroke="#000" stroke-dasharray="1 1"/><path d="M1 13l12-10" stroke="#000"/></svg>
<div class="t" style="left:25px;top:501.50px;font-size:13px;line-height:13px;color:#000;">Quantitate</div>
<div class="r" style="left:12px;top:531px;width:10px;height:1px;background:repeating-linear-gradient(90deg,#a0a0a0 0 1px,transparent 1px 2px);"></div>
<svg class="r" style="left:24px;top:525px;shape-rendering:auto" width="16" height="16" viewBox="0 0 16 16" fill="none" shape-rendering="crispEdges"><rect x=".5" y="1.5" width="11" height="13" fill="#fff" stroke="#000"/><path d="M2 4.5h5M2 7.5h5M2 10.5h5M2 12.5h7" stroke="#800000"/><path d="M7 11l6-9l2 1.5l-6 9z" fill="#ffd000" stroke="#000" stroke-width=".8"/></svg>
<div class="t" style="left:45px;top:525.50px;font-size:13px;line-height:13px;color:#000;">Build Quantitation Method</div>
<div class="r" style="left:12px;top:555px;width:10px;height:1px;background:repeating-linear-gradient(90deg,#a0a0a0 0 1px,transparent 1px 2px);"></div>
<svg class="r" style="left:24px;top:549px;shape-rendering:auto" width="16" height="16" viewBox="0 0 16 16" fill="none" shape-rendering="crispEdges"><path d="M1.5 4l9.5 9.5" stroke="#000" stroke-width="2"/><path d="M1.5 4l2.5 2.5" stroke="#ff0" stroke-width="1.2"/><rect x="5" y="1" width="1.3" height="1.3" fill="#c00000"/><rect x="8" y="0" width="1.3" height="1.3" fill="#c00000"/><rect x="7" y="3" width="1.3" height="1.3" fill="#c00000"/><rect x="10" y="3" width="1.3" height="1.3" fill="#c00000"/><rect x="11" y="6" width="1.3" height="1.3" fill="#c00000"/></svg>
<div class="t" style="left:45px;top:549.50px;font-size:13px;line-height:13px;color:#000;">Quantitation Wizard</div>
<div class="r" style="left:12px;top:579px;width:10px;height:1px;background:repeating-linear-gradient(90deg,#a0a0a0 0 1px,transparent 1px 2px);"></div>
<svg class="r" style="left:24px;top:573px;shape-rendering:auto" width="16" height="16" viewBox="0 0 16 16" fill="none" shape-rendering="crispEdges"><rect x=".5" y=".5" width="14" height="14" fill="#fff" stroke="#000"/><path d="M1 3.5h13" stroke="#000"/><path d="M3 8.5l3 3l6-6" stroke="#e00000" stroke-width="1.8"/></svg>
<div class="t" style="left:45px;top:573.50px;font-size:13px;line-height:13px;color:#000;">Review Results Table</div>
<svg class="r" style="left:4px;top:597px;shape-rendering:auto" width="16" height="16" viewBox="0 0 16 16" fill="none" shape-rendering="crispEdges"><defs><linearGradient id="cg1" x1="0" y1="0" x2="1" y2="1"><stop offset="0" stop-color="#c4e2ee"/><stop offset="1" stop-color="#4e98b8"/></linearGradient></defs><rect x="0" y="0" width="16" height="16" fill="url(#cg1)"/><path d="M0 15.5L5.5 1h1L12.5 15.5z" fill="#0a78a8"/><path d="M2.5 14L6 6l3.5 8z" fill="#a8d4e4"/><rect x="0" y="14" width="14" height="2" fill="#0a6890"/><path d="M11 1h4v4" stroke="#0a5a88" stroke-width="1.1"/></svg>
<div class="t" style="left:25px;top:597.50px;font-size:13px;line-height:13px;color:#000;">Companion Software</div>
<div class="r" style="left:12px;top:627px;width:10px;height:1px;background:repeating-linear-gradient(90deg,#a0a0a0 0 1px,transparent 1px 2px);"></div>
<svg class="r" style="left:24px;top:621px;shape-rendering:auto" width="16" height="16" viewBox="0 0 16 16" fill="none" shape-rendering="crispEdges"><defs><linearGradient id="cg2" x1="0" y1="0" x2="1" y2="1"><stop offset="0" stop-color="#c4e2ee"/><stop offset="1" stop-color="#4e98b8"/></linearGradient></defs><rect x="0" y="0" width="16" height="16" fill="url(#cg2)"/><path d="M0 15.5L5.5 1h1L12.5 15.5z" fill="#0a78a8"/><path d="M2.5 14L6 6l3.5 8z" fill="#a8d4e4"/><rect x="0" y="14" width="14" height="2" fill="#0a6890"/><path d="M11 1l4 4M15 1l-4 4" stroke="#0a5a88" stroke-width="1.1"/></svg>
<div class="t" style="left:45px;top:621.50px;font-size:13px;line-height:13px;color:#000;letter-spacing:0.262px;">Analyst Device Driver</div>
<div class="r" style="left:12px;top:651px;width:10px;height:1px;background:repeating-linear-gradient(90deg,#a0a0a0 0 1px,transparent 1px 2px);"></div>
<svg class="r" style="left:24px;top:645px;shape-rendering:auto" width="16" height="16" viewBox="0 0 16 16" fill="none" shape-rendering="crispEdges"><rect x="0" y="0" width="16" height="16" fill="#2a78c8"/><path d="M2 14l5-6l3 2l4-7" stroke="#fff" stroke-width="1.5"/><circle cx="2" cy="13" r="2" fill="#fff"/><path d="M11 1h4v3" stroke="#c8e4f0"/></svg>
<div class="t" style="left:45px;top:645.50px;font-size:13px;line-height:13px;color:#000;letter-spacing:-0.193px;">MultiQuant 3.0.2</div>
<div class="r" style="left:12px;top:675px;width:10px;height:1px;background:repeating-linear-gradient(90deg,#a0a0a0 0 1px,transparent 1px 2px);"></div>
<svg class="r" style="left:24px;top:669px;shape-rendering:auto" width="16" height="16" viewBox="0 0 16 16" fill="none" shape-rendering="crispEdges"><rect x="1.5" y=".5" width="12" height="15" fill="#fff" stroke="#404060"/><path d="M3 3h9M3 5h9M3 7h6" stroke="#6070a0"/><rect x="4" y="11" width="2" height="3" fill="#e04020"/><rect x="7" y="9" width="2" height="5" fill="#2060e0"/><rect x="10" y="10" width="2" height="4" fill="#20a040"/></svg>
<div class="t" style="left:45px;top:669.50px;font-size:13px;line-height:13px;color:#000;">Reporter 3.2</div>
<div class="r" style="left:222px;top:122px;width:233px;height:609px;background:#f4f6fb;border-left:2px solid #6a6a6a;border-top:1px solid #6f6f6f;border-right:2px solid #6a6a6a;box-shadow:inset 1px 1px 0 #fff;"></div>
<div class="r" style="left:233px;top:132px;width:213px;height:599px;background:#f0f0f0;border:3px solid #bdbdbd;border-bottom:none;"></div>
<div class="t" style="left:246px;top:145.20px;font-size:13px;line-height:13px;color:#000;letter-spacing:0.215px;">Acquisition method</div>
<div class="r" style="left:236px;top:167px;width:207px;height:564px;background:#fff;border-top:2px solid #6d6d6d;border-left:2px solid #6d6d6d;border-right:2px solid #e6e6e6;"></div>
<div class="r" style="left:268px;top:190px;width:1px;height:74px;background:repeating-linear-gradient(#a0a0a0 0 1px,transparent 1px 2px);"></div>
<div class="r" style="left:287px;top:212px;width:1px;height:8px;background:repeating-linear-gradient(#a0a0a0 0 1px,transparent 1px 2px);"></div>
<div class="r" style="left:306px;top:234px;width:1px;height:14px;background:repeating-linear-gradient(#a0a0a0 0 1px,transparent 1px 2px);"></div>
<div class="r" style="left:306px;top:247px;width:11px;height:1px;background:repeating-linear-gradient(90deg,#a0a0a0 0 1px,transparent 1px 2px);"></div>
<div class="r" style="left:287px;top:278px;width:1px;height:36px;background:repeating-linear-gradient(#a0a0a0 0 1px,transparent 1px 2px);"></div>
<div class="r" style="left:287px;top:291px;width:11px;height:1px;background:repeating-linear-gradient(90deg,#a0a0a0 0 1px,transparent 1px 2px);"></div>
<div class="r" style="left:287px;top:313px;width:11px;height:1px;background:repeating-linear-gradient(90deg,#a0a0a0 0 1px,transparent 1px 2px);"></div>
<div class="r" style="left:256px;top:181px;width:4px;height:1px;background:repeating-linear-gradient(90deg,#a0a0a0 0 1px,transparent 1px 2px);"></div>
<div class="r" style="left:275px;top:203px;width:4px;height:1px;background:repeating-linear-gradient(90deg,#a0a0a0 0 1px,transparent 1px 2px);"></div>
<div class="r" style="left:294px;top:225px;width:4px;height:1px;background:repeating-linear-gradient(90deg,#a0a0a0 0 1px,transparent 1px 2px);"></div>
<div class="r" style="left:275px;top:269px;width:4px;height:1px;background:repeating-linear-gradient(90deg,#a0a0a0 0 1px,transparent 1px 2px);"></div>
<div class="r" style="left:244px;top:176px;width:11px;height:11px;background:linear-gradient(#fcfcfc,#dcdcdc);border:1px solid #9a9aa8;border-radius:1px;"></div>
<div class="r" style="left:246px;top:181px;width:7px;height:1px;background:#3a4fa8;"></div>
<svg class="r" style="left:260px;top:172px;shape-rendering:auto" width="16" height="16" viewBox="0 0 16 16" fill="none" shape-rendering="crispEdges"><rect x="1.5" y="1.5" width="10" height="13" fill="#fff" stroke="#000"/><path d="M2 3h2M2 5h2M2 7h2M2 9h2M2 11h2M2 13h8" stroke="#666"/><rect x="5" y="2" width="2" height="9" fill="#000"/><path d="M7 1h3v4h-1v6h-1z" fill="#000"/><path d="M9 1h2l2 3v-3h2v9h-2v-4l-2 3z" fill="#000"/></svg>
<div class="t" style="left:281px;top:172.90px;font-size:15px;line-height:15px;color:#000;letter-spacing:0.192px;">Acquisition Method</div>
<div class="r" style="left:263px;top:198px;width:11px;height:11px;background:linear-gradient(#fcfcfc,#dcdcdc);border:1px solid #9a9aa8;border-radius:1px;"></div>
<div class="r" style="left:265px;top:203px;width:7px;height:1px;background:#3a4fa8;"></div>
<svg class="r" style="left:279px;top:194px;shape-rendering:auto" width="16" height="16" viewBox="0 0 16 16" fill="none" shape-rendering="crispEdges"><path d="M1.5 10.5l8-8.5l3-1l2.5 2.5l-.5 3l-8 8l-3 1l-2-2z" fill="#d0d0d0" stroke="#000" stroke-width="1.3" stroke-dasharray="1.6 .7"/><path d="M4 13.5l9.5-9.5M3 9l4 4M5.5 6.5l4 4M8 4l4 4" stroke="#000" stroke-width="1" stroke-dasharray="1.3 1"/><path d="M10 2l3.5 3.5" stroke="#fff"/><circle cx="3.5" cy="12" r="1" fill="#f00"/><circle cx="5.5" cy="14" r="1" fill="#f00"/><rect x="15" y="12" width="1.2" height="1.2" fill="#00f"/></svg>
<div class="t" style="left:300px;top:194.90px;font-size:15px;line-height:15px;color:#000;letter-spacing:-0.390px;">Mass Spec  5.000 min</div>
<div class="r" style="left:282px;top:220px;width:11px;height:11px;background:linear-gradient(#fcfcfc,#dcdcdc);border:1px solid #9a9aa8;border-radius:1px;"></div>
<div class="r" style="left:284px;top:225px;width:7px;height:1px;background:#3a4fa8;"></div>
<svg class="r" style="left:298px;top:216px;shape-rendering:auto" width="16" height="16" viewBox="0 0 16 16" fill="none" shape-rendering="crispEdges"><rect x="4.5" y=".5" width="4" height="2.5" rx="1" fill="#fff" stroke="#000"/><circle cx="6.5" cy="8.5" r="5" fill="#fff" stroke="#000" stroke-width="1.1"/><path d="M3.5 8.5h6M6.5 5v3.5M4 11l1-1M9 11l-1-1" stroke="#000"/></svg>
<div class="t" style="left:319px;top:216.90px;font-size:15px;line-height:15px;color:#000;letter-spacing:-0.160px;">Period  5.000 min</div>
<svg class="r" style="left:317px;top:238px;shape-rendering:auto" width="16" height="16" viewBox="0 0 16 16" fill="none" shape-rendering="crispEdges"><path d="M1 8l2-4l5-3l1 1l-3 5l-4 2z" fill="#ffff00" stroke="#000" stroke-width="1.1"/><path d="M2 7l1-2l2 1l-1 2z" fill="#ff0000"/><path d="M8 7l2-4l5-3l1 1l-3 5l-4 2z" fill="#ffff00" stroke="#000" stroke-width="1.1"/><path d="M9 6l1-2l2 1l-1 2z" fill="#ff0000"/><path d="M1 15l2-4l5-3l1 1l-3 5l-4 2z" fill="#ffff00" stroke="#000" stroke-width="1.1"/><path d="M2 14l1-2l2 1l-1 2z" fill="#ff0000"/><path d="M8 14l2-4l5-3l1 1l-3 5l-4 2z" fill="#ffff00" stroke="#000" stroke-width="1.1"/><path d="M9 13l1-2l2 1l-1 2z" fill="#ff0000"/></svg>
<div class="t" style="left:339px;top:238.90px;font-size:15px;line-height:15px;color:#000;letter-spacing:-0.361px;">+MRM</div>
<div class="r" style="left:263px;top:264px;width:11px;height:11px;background:linear-gradient(#fcfcfc,#dcdcdc);border:1px solid #9a9aa8;border-radius:1px;"></div>
<div class="r" style="left:265px;top:269px;width:7px;height:1px;background:#3a4fa8;"></div>
<svg class="r" style="left:278px;top:260px;shape-rendering:auto" width="16" height="16" viewBox="0 0 16 16" fill="none" shape-rendering="crispEdges"><path d="M3 1.5h7M6.5 1v3" stroke="#000" stroke-width="1.5"/><rect x="4" y="4" width="5" height="8" fill="#000"/><path d="M1 10v4h11" stroke="#000" stroke-width="1.5"/></svg>
<div class="t" style="left:300px;top:260.90px;font-size:15px;line-height:15px;color:#000;letter-spacing:-0.484px;">Shimadzu LC System</div>
<svg class="r" style="left:298px;top:282px;shape-rendering:auto" width="16" height="16" viewBox="0 0 16 16" fill="none" shape-rendering="crispEdges"><path d="M0 13q3-4 6-3l5-3" stroke="#000" stroke-width="1.4"/><rect x="11" y="5" width="3" height="3" fill="#000"/><path d="M5 10l2 3M9 8l1 4" stroke="#000" stroke-width="1.2"/></svg>
<div class="t" style="left:319px;top:282.90px;font-size:15px;line-height:15px;color:#000;letter-spacing:0.112px;">Equilibrate</div>
<svg class="r" style="left:298px;top:303px;shape-rendering:auto" width="16" height="16" viewBox="0 0 16 16" fill="none" shape-rendering="crispEdges"><rect x="6" y="1" width="3" height="3" fill="#000"/><path d="M7.5 4v6l-4 3l1 2M7.5 10l3 2v3M2 9l5-2l6 2M1 14l3 1" stroke="#000" stroke-width="1.3"/></svg>
<div class="t" style="left:319px;top:304.90px;font-size:15px;line-height:15px;color:#000;letter-spacing:0.141px;">Injection</div>
<div class="r" style="left:455px;top:122px;width:1348px;height:609px;background:#f4f6fb;border-top:1px solid #6f6f6f;box-shadow:inset 1px 1px 0 #fff;"></div>
<div class="r" style="left:464px;top:132px;width:1339px;height:599px;background:#fff;border-left:3px solid #000080;border-top:3px solid #000080;"></div>
<div class="r" style="left:612px;top:135px;width:1191px;height:24px;background:#f0f0f0;"></div>
<div class="r" style="left:467px;top:158px;width:1336px;height:1px;background:#898c95;"></div>
<div class="r" style="left:467px;top:135px;width:51px;height:24px;background:#fff;"></div>
<div class="r" style="left:518px;top:137px;width:94px;height:22px;background:linear-gradient(#f2f2f2 0%,#ebebeb 45%,#dddddd 50%,#cfcfcf 100%);border:1px solid #898c95;border-bottom:none;box-shadow:inset 1px 1px 0 #fff,inset -1px 0 0 #fff;"></div>
<div class="r" style="left:518px;top:135px;width:1px;height:2px;background:#898c95;"></div>
<div class="t" style="left:475px;top:139.15px;font-size:14px;line-height:14px;color:#000;letter-spacing:-0.500px;">MS</div>
<div class="t" style="left:523px;top:141.15px;font-size:14px;line-height:14px;color:#000;letter-spacing:-0.166px;">Advanced MS</div>
<div class="t" style="left:480px;top:183.00px;font-size:13px;line-height:13px;color:#000;">Experiment:</div>
<div class="r" style="left:570px;top:177px;width:84px;height:24px;border:1px solid #707070;border-radius:3px;background:linear-gradient(#f2f2f2 0%,#ebebeb 45%,#dddddd 50%,#cfcfcf 100%);box-shadow:inset 0 0 0 1px rgba(255,255,255,.6);"></div>
<svg class="r" style="left:638px;top:187px;shape-rendering:auto" width="10" height="6" viewBox="0 0 10 6" fill="none" shape-rendering="crispEdges"><path d="M0 0h10l-5 5z" fill="#000"/></svg>
<div class="t" style="left:575px;top:183.00px;font-size:13px;line-height:13px;color:#000;">1</div>
<div class="t" style="left:480px;top:221.00px;font-size:13px;line-height:13px;color:#000;">Scan type:</div>
<div class="r" style="left:570px;top:215px;width:200px;height:24px;border:1px solid #707070;border-radius:3px;background:linear-gradient(#f2f2f2 0%,#ebebeb 45%,#dddddd 50%,#cfcfcf 100%);box-shadow:inset 0 0 0 1px rgba(255,255,255,.6);"></div>
<svg class="r" style="left:754px;top:225px;shape-rendering:auto" width="10" height="6" viewBox="0 0 10 6" fill="none" shape-rendering="crispEdges"><path d="M0 0h10l-5 5z" fill="#000"/></svg>
<div class="t" style="left:574px;top:221.00px;font-size:13px;line-height:13px;color:#000;">MRM (MRM)</div>
<div class="r" style="left:480px;top:295px;width:202px;height:53px;border:1px solid #d5dfe5;border-radius:3px;"></div>
<div class="t" style="left:489px;top:289.00px;font-size:13px;line-height:13px;color:#000;background:#fff;padding:0 2px;margin-left:-2px;">Polarity</div>
<svg class="r" style="left:572px;top:303px;shape-rendering:auto" width="16" height="16" viewBox="0 0 16 16" fill="none" shape-rendering="crispEdges"><circle cx="7.5" cy="7.5" r="7" fill="#f4f4f4" stroke="#4a4a4a"/><circle cx="7.5" cy="7.5" r="4.2" fill="#1a6fa0"/><circle cx="6.8" cy="6.5" r="2" fill="#6cc8f0"/></svg>
<div class="t" style="left:591px;top:304.70px;font-size:13px;line-height:13px;color:#000;letter-spacing:0.426px;">Positive</div>
<svg class="r" style="left:572px;top:327px;shape-rendering:auto" width="16" height="16" viewBox="0 0 16 16" fill="none" shape-rendering="crispEdges"><defs><linearGradient id="rg572327" x1="0" y1="0" x2="1" y2="1"><stop offset="0" stop-color="#c8c8c8"/><stop offset="1" stop-color="#fff"/></linearGradient></defs><circle cx="7.5" cy="7.5" r="7" fill="#f4f4f4" stroke="#6a6a6a"/><circle cx="7.5" cy="7.5" r="4.5" fill="url(#rg572327)"/></svg>
<div class="t" style="left:591px;top:328.50px;font-size:13px;line-height:13px;color:#000;letter-spacing:0.599px;">Negative</div>
<div class="r" style="left:806px;top:169px;width:208px;height:67px;border:1px solid #d5dfe5;border-radius:3px;"></div>
<div class="t" style="left:861px;top:163.00px;font-size:13px;line-height:13px;color:#000;letter-spacing:0.367px;background:#fff;padding:0 2px;margin-left:-2px;">Scheduled MRM</div>
<div class="r" style="left:824px;top:181px;width:15px;height:15px;border:1px solid #8e8f8f;background:linear-gradient(135deg,#d8dade,#f8f8f8);box-shadow:inset 0 0 0 2px #f4f4f4;"></div>
<div class="t" style="left:843px;top:183.00px;font-size:13px;line-height:13px;color:#000;letter-spacing:0.549px;">Enabled</div>
<svg class="r" style="left:824px;top:209px;shape-rendering:auto" width="16" height="16" viewBox="0 0 16 16" fill="none" shape-rendering="crispEdges"><circle cx="7.5" cy="7.5" r="7" fill="#f4f4f4" stroke="#b0b0b0"/><circle cx="7.5" cy="7.5" r="4.2" fill="#9a9a9a"/><circle cx="6.8" cy="6.5" r="2" fill="#d8d8d8"/></svg>
<div class="t" style="left:843px;top:210.50px;font-size:13px;line-height:13px;color:#8d8d8d;letter-spacing:0.678px;">Basic</div>
<svg class="r" style="left:890px;top:209px;shape-rendering:auto" width="16" height="16" viewBox="0 0 16 16" fill="none" shape-rendering="crispEdges"><defs><linearGradient id="rg890209" x1="0" y1="0" x2="1" y2="1"><stop offset="0" stop-color="#c8c8c8"/><stop offset="1" stop-color="#fff"/></linearGradient></defs><circle cx="7.5" cy="7.5" r="7" fill="#f4f4f4" stroke="#b0b0b0"/><circle cx="7.5" cy="7.5" r="4.5" fill="url(#rg890209)"/></svg>
<div class="t" style="left:909px;top:210.50px;font-size:13px;line-height:13px;color:#8d8d8d;letter-spacing:0.597px;">Advanced</div>
<div class="r" style="left:1027px;top:174px;width:128px;height:26px;border:1px solid #707070;border-radius:3px;background:linear-gradient(#f2f2f2 0%,#ebebeb 45%,#dddddd 50%,#cfcfcf 100%);box-shadow:inset 0 0 0 1px rgba(255,255,255,.7);"></div>
<div class="t" style="left:1061px;top:181.00px;font-size:13px;line-height:13px;color:#000;">Import List</div>
<div class="r" style="left:784px;top:255px;width:472px;height:89px;border:1px solid #d5dfe5;border-radius:3px;"></div>
<div class="t" style="left:971px;top:249.00px;font-size:13px;line-height:13px;color:#000;letter-spacing:0.246px;background:#fff;padding:0 2px;margin-left:-2px;">Period Summary</div>
<div class="t" style="left:802px;top:283.00px;font-size:13px;line-height:13px;color:#000;">Duration:</div>
<div class="r" style="left:890px;top:275px;width:74px;height:28px;background:#fff;border:1px solid #abadb3;border-top-color:#7a7a7a;border-radius:2px;border-color:#8a8a8a #d5d5d5 #e3e3e3 #cfcfcf;"></div>
<div class="t" style="left:893px;top:280.00px;font-size:13px;line-height:13px;color:#000;">5.000</div>
<div class="t" style="left:974px;top:284.00px;font-size:13px;line-height:13px;color:#000;">(min)</div>
<div class="t" style="left:1038px;top:282.50px;font-size:13px;line-height:13px;color:#000;letter-spacing:0.437px;">Delay Time:</div>
<div class="r" style="left:1126px;top:275px;width:74px;height:29px;background:#fff;border:1px solid #abadb3;border-top-color:#7a7a7a;border-radius:2px;border-color:#8a8a8a #d5d5d5 #e3e3e3 #cfcfcf;"></div>
<div class="t" style="left:1129px;top:280.00px;font-size:13px;line-height:13px;color:#000;">0</div>
<div class="t" style="left:1208px;top:285.50px;font-size:13px;line-height:13px;color:#000;letter-spacing:0.403px;">(sec)</div>
<div class="t" style="left:802px;top:316.50px;font-size:13px;line-height:13px;color:#000;">Cycles:</div>
<div class="r" style="left:890px;top:309px;width:54px;height:28px;background:#fff;border:1px solid #abadb3;border-top-color:#7a7a7a;border-radius:2px;border-color:#8a8a8a #d5d5d5 #e3e3e3 #cfcfcf;"></div>
<div class="t" style="left:893px;top:314.00px;font-size:13px;line-height:13px;color:#000;">4998</div>
<div class="r" style="left:943px;top:309px;width:21px;height:28px;background:#f0f0f0;border:1px solid #a0a0a0;box-shadow:inset 0 0 0 1px #fff;"></div>
<div class="r" style="left:945px;top:311px;width:17px;height:12px;background:linear-gradient(#f4f4f4,#dcdcdc);border:1px solid #c0c0c0;"></div>
<div class="r" style="left:945px;top:323px;width:17px;height:12px;background:linear-gradient(#f4f4f4,#dcdcdc);border:1px solid #c0c0c0;"></div>
<svg class="r" style="left:949px;top:315px;shape-rendering:auto" width="9" height="5" viewBox="0 0 9 5" fill="none" shape-rendering="crispEdges"><path d="M0 5h9l-4.5-5z" fill="#4a5aa8"/></svg>
<svg class="r" style="left:949px;top:328px;shape-rendering:auto" width="9" height="5" viewBox="0 0 9 5" fill="none" shape-rendering="crispEdges"><path d="M0 0h9l-4.5 5z" fill="#4a5aa8"/></svg>
<div class="t" style="left:1038px;top:315.00px;font-size:13px;line-height:13px;color:#000;">Cycle:</div>
<div class="r" style="left:1126px;top:309px;width:74px;height:28px;background:#fff;border:1px solid #abadb3;border-top-color:#7a7a7a;border-radius:2px;border-color:#8a8a8a #d5d5d5 #e3e3e3 #cfcfcf;"></div>
<div class="t" style="left:1129px;top:313.60px;font-size:13px;line-height:13px;color:#000;letter-spacing:-0.252px;">0.0600</div>
<div class="t" style="left:1208px;top:315.50px;font-size:13px;line-height:13px;color:#000;letter-spacing:0.403px;">(sec)</div>
<div class="t" style="left:481px;top:486.80px;font-size:13px;line-height:13px;color:#000;letter-spacing:0.394px;">Total Scan Time</div>
<div class="t" style="left:481px;top:502.40px;font-size:13px;line-height:13px;color:#000;letter-spacing:0.177px;">(includes pauses):</div>
<div class="r" style="left:658px;top:489px;width:80px;height:28px;background:#fff;border:1px solid #abadb3;border-top-color:#7a7a7a;border-radius:2px;border-color:#8a8a8a #d5d5d5 #e3e3e3 #cfcfcf;"></div>
<div class="t" style="left:661px;top:493.80px;font-size:13px;line-height:13px;color:#8d8d8d;letter-spacing:-0.252px;">0.0600</div>
<div class="t" style="left:742px;top:495.80px;font-size:13px;line-height:13px;color:#000;letter-spacing:0.403px;">(sec)</div>
<div class="r" style="left:483px;top:528px;width:138px;height:26px;border:1px solid #707070;border-radius:3px;background:linear-gradient(#f2f2f2 0%,#ebebeb 45%,#dddddd 50%,#cfcfcf 100%);box-shadow:inset 0 0 0 1px rgba(255,255,255,.7);"></div>
<div class="t" style="left:499px;top:535.00px;font-size:13px;line-height:13px;color:#000;">Edit Parameters...</div>
<div class="r" style="left:788px;top:357px;width:1015px;height:374px;background:#efefef;border-left:2px solid #6a6a6a;border-top:2px solid #6a6a6a;"></div>
<div class="r" style="left:790px;top:359px;width:54px;height:35px;background:#f0f0f0;border-top:1px solid #fff;border-left:1px solid #fff;border-right:2px solid #111;border-bottom:2px solid #111;"></div>
<div class="r" style="left:844px;top:359px;width:91px;height:35px;background:#f0f0f0;border-top:1px solid #fff;border-left:1px solid #fff;border-right:2px solid #111;border-bottom:2px solid #111;"></div>
<div class="r" style="left:935px;top:359px;width:91px;height:35px;background:#f0f0f0;border-top:1px solid #fff;border-left:1px solid #fff;border-right:2px solid #111;border-bottom:2px solid #111;"></div>
<div class="r" style="left:1026px;top:359px;width:91px;height:35px;background:#f0f0f0;border-top:1px solid #fff;border-left:1px solid #fff;border-right:2px solid #111;border-bottom:2px solid #111;"></div>
<div class="r" style="left:1117px;top:359px;width:91px;height:35px;background:#f0f0f0;border-top:1px solid #fff;border-left:1px solid #fff;border-right:2px solid #111;border-bottom:2px solid #111;"></div>
<div class="r" style="left:1208px;top:359px;width:91px;height:35px;background:#f0f0f0;border-top:1px solid #fff;border-left:1px solid #fff;border-right:2px solid #111;border-bottom:2px solid #111;"></div>
<div class="r" style="left:1299px;top:359px;width:91px;height:35px;background:#f0f0f0;border-top:1px solid #fff;border-left:1px solid #fff;border-right:2px solid #111;border-bottom:2px solid #111;"></div>
<div class="r" style="left:1390px;top:359px;width:91px;height:35px;background:#f0f0f0;border-top:1px solid #fff;border-left:1px solid #fff;border-right:2px solid #111;border-bottom:2px solid #111;"></div>
<div class="r" style="left:1481px;top:359px;width:91px;height:35px;background:#f0f0f0;border-top:1px solid #fff;border-left:1px solid #fff;border-right:2px solid #111;border-bottom:2px solid #111;"></div>
<div class="r" style="left:790px;top:394px;width:54px;height:19px;background:#f0f0f0;border-top:1px solid #fff;border-left:1px solid #fff;border-right:2px solid #111;border-bottom:2px solid #111;"></div>
<div class="t" style="left:796px;top:396.80px;font-size:13px;line-height:13px;color:#000;">1</div>
<div class="r" style="left:844px;top:394px;width:92px;height:20px;background:#fff;border:1px solid #a0a0a0;"></div>
<div class="t" style="left:849px;top:396.80px;font-size:13px;line-height:13px;color:#000;letter-spacing:-0.274px;">286.100</div>
<div class="r" style="left:935px;top:394px;width:92px;height:20px;background:#fff;border:1px solid #a0a0a0;"></div>
<div class="t" style="left:940px;top:396.80px;font-size:13px;line-height:13px;color:#000;letter-spacing:-0.274px;">222.100</div>
<div class="r" style="left:1026px;top:394px;width:92px;height:20px;background:#fff;border:1px solid #a0a0a0;"></div>
<div class="t" style="left:1031px;top:396.80px;font-size:13px;line-height:13px;color:#000;letter-spacing:-0.295px;">10.0</div>
<div class="r" style="left:1117px;top:394px;width:92px;height:20px;background:#fff;border:1px solid #a0a0a0;"></div>
<div class="t" style="left:1122px;top:396.80px;font-size:13px;line-height:13px;color:#000;letter-spacing:-0.253px;">7-Aminoclona</div>
<div class="r" style="left:1208px;top:394px;width:92px;height:20px;background:#fff;border:1px solid #a0a0a0;"></div>
<div class="t" style="left:1213px;top:396.80px;font-size:13px;line-height:13px;color:#000;letter-spacing:-0.274px;">125.000</div>
<div class="r" style="left:1299px;top:394px;width:92px;height:20px;background:#fff;border:1px solid #a0a0a0;"></div>
<div class="t" style="left:1304px;top:396.80px;font-size:13px;line-height:13px;color:#000;letter-spacing:-0.278px;">10.000</div>
<div class="r" style="left:1390px;top:394px;width:92px;height:20px;background:#fff;border:1px solid #a0a0a0;"></div>
<div class="t" style="left:1395px;top:396.80px;font-size:13px;line-height:13px;color:#000;letter-spacing:-0.278px;">31.000</div>
<div class="r" style="left:1481px;top:394px;width:92px;height:20px;background:#fff;border:1px solid #a0a0a0;"></div>
<div class="t" style="left:1486px;top:396.80px;font-size:13px;line-height:13px;color:#000;letter-spacing:-0.278px;">12.000</div>
<div class="r" style="left:790px;top:413px;width:54px;height:19px;background:#f0f0f0;border-top:1px solid #fff;border-left:1px solid #fff;border-right:2px solid #111;border-bottom:2px solid #111;"></div>
<div class="t" style="left:796px;top:415.80px;font-size:13px;line-height:13px;color:#000;">2</div>
<div class="r" style="left:844px;top:413px;width:92px;height:20px;background:#fff;border:1px solid #a0a0a0;"></div>
<div class="t" style="left:849px;top:415.80px;font-size:13px;line-height:13px;color:#000;letter-spacing:-0.274px;">286.100</div>
<div class="r" style="left:935px;top:413px;width:92px;height:20px;background:#fff;border:1px solid #a0a0a0;"></div>
<div class="t" style="left:940px;top:415.80px;font-size:13px;line-height:13px;color:#000;letter-spacing:-0.274px;">121.100</div>
<div class="r" style="left:1026px;top:413px;width:92px;height:20px;background:#fff;border:1px solid #a0a0a0;"></div>
<div class="t" style="left:1031px;top:415.80px;font-size:13px;line-height:13px;color:#000;letter-spacing:-0.295px;">10.0</div>
<div class="r" style="left:1117px;top:413px;width:92px;height:20px;background:#fff;border:1px solid #a0a0a0;"></div>
<div class="t" style="left:1122px;top:415.80px;font-size:13px;line-height:13px;color:#000;letter-spacing:-0.253px;">7-Aminoclona</div>
<div class="r" style="left:1208px;top:413px;width:92px;height:20px;background:#fff;border:1px solid #a0a0a0;"></div>
<div class="t" style="left:1213px;top:415.80px;font-size:13px;line-height:13px;color:#000;letter-spacing:-0.274px;">125.000</div>
<div class="r" style="left:1299px;top:413px;width:92px;height:20px;background:#fff;border:1px solid #a0a0a0;"></div>
<div class="t" style="left:1304px;top:415.80px;font-size:13px;line-height:13px;color:#000;letter-spacing:-0.278px;">10.000</div>
<div class="r" style="left:1390px;top:413px;width:92px;height:20px;background:#fff;border:1px solid #a0a0a0;"></div>
<div class="t" style="left:1395px;top:415.80px;font-size:13px;line-height:13px;color:#000;letter-spacing:-0.278px;">33.000</div>
<div class="r" style="left:1481px;top:413px;width:92px;height:20px;background:#fff;border:1px solid #a0a0a0;"></div>
<div class="t" style="left:1486px;top:415.80px;font-size:13px;line-height:13px;color:#000;letter-spacing:-0.278px;">12.000</div>
<div class="r" style="left:790px;top:432px;width:54px;height:19px;background:#f0f0f0;border-top:1px solid #fff;border-left:1px solid #fff;border-right:2px solid #111;border-bottom:2px solid #111;"></div>
<div class="t" style="left:796px;top:434.80px;font-size:13px;line-height:13px;color:#000;">3</div>
<div class="r" style="left:844px;top:432px;width:92px;height:20px;background:#fff;border:1px solid #a0a0a0;"></div>
<div class="t" style="left:849px;top:434.80px;font-size:13px;line-height:13px;color:#000;letter-spacing:-0.274px;">284.100</div>
<div class="r" style="left:935px;top:432px;width:92px;height:20px;background:#fff;border:1px solid #a0a0a0;"></div>
<div class="t" style="left:940px;top:434.80px;font-size:13px;line-height:13px;color:#000;letter-spacing:-0.274px;">135.100</div>
<div class="r" style="left:1026px;top:432px;width:92px;height:20px;background:#fff;border:1px solid #a0a0a0;"></div>
<div class="t" style="left:1031px;top:434.80px;font-size:13px;line-height:13px;color:#000;letter-spacing:-0.295px;">10.0</div>
<div class="r" style="left:1117px;top:432px;width:92px;height:20px;background:#fff;border:1px solid #a0a0a0;"></div>
<div class="t" style="left:1122px;top:434.80px;font-size:13px;line-height:13px;color:#000;letter-spacing:-0.216px;">7-Aminoflunitr</div>
<div class="r" style="left:1208px;top:432px;width:92px;height:20px;background:#fff;border:1px solid #a0a0a0;"></div>
<div class="t" style="left:1213px;top:434.80px;font-size:13px;line-height:13px;color:#000;letter-spacing:-0.274px;">125.000</div>
<div class="r" style="left:1299px;top:432px;width:92px;height:20px;background:#fff;border:1px solid #a0a0a0;"></div>
<div class="t" style="left:1304px;top:434.80px;font-size:13px;line-height:13px;color:#000;letter-spacing:-0.278px;">10.000</div>
<div class="r" style="left:1390px;top:432px;width:92px;height:20px;background:#fff;border:1px solid #a0a0a0;"></div>
<div class="t" style="left:1395px;top:434.80px;font-size:13px;line-height:13px;color:#000;letter-spacing:-0.278px;">33.000</div>
<div class="r" style="left:1481px;top:432px;width:92px;height:20px;background:#fff;border:1px solid #a0a0a0;"></div>
<div class="t" style="left:1486px;top:434.80px;font-size:13px;line-height:13px;color:#000;letter-spacing:-0.278px;">12.000</div>
<div class="r" style="left:790px;top:451px;width:54px;height:19px;background:#f0f0f0;border-top:1px solid #fff;border-left:1px solid #fff;border-right:2px solid #111;border-bottom:2px solid #111;"></div>
<div class="t" style="left:796px;top:453.80px;font-size:13px;line-height:13px;color:#000;">4</div>
<div class="r" style="left:844px;top:451px;width:92px;height:20px;background:#fff;border:1px solid #a0a0a0;"></div>
<div class="t" style="left:849px;top:453.80px;font-size:13px;line-height:13px;color:#000;letter-spacing:-0.274px;">284.100</div>
<div class="r" style="left:935px;top:451px;width:92px;height:20px;background:#fff;border:1px solid #a0a0a0;"></div>
<div class="t" style="left:940px;top:453.80px;font-size:13px;line-height:13px;color:#000;letter-spacing:-0.274px;">227.100</div>
<div class="r" style="left:1026px;top:451px;width:92px;height:20px;background:#fff;border:1px solid #a0a0a0;"></div>
<div class="t" style="left:1031px;top:453.80px;font-size:13px;line-height:13px;color:#000;letter-spacing:-0.295px;">10.0</div>
<div class="r" style="left:1117px;top:451px;width:92px;height:20px;background:#fff;border:1px solid #a0a0a0;"></div>
<div class="t" style="left:1122px;top:453.80px;font-size:13px;line-height:13px;color:#000;letter-spacing:-0.216px;">7-Aminoflunitr</div>
<div class="r" style="left:1208px;top:451px;width:92px;height:20px;background:#fff;border:1px solid #a0a0a0;"></div>
<div class="t" style="left:1213px;top:453.80px;font-size:13px;line-height:13px;color:#000;letter-spacing:-0.274px;">125.000</div>
<div class="r" style="left:1299px;top:451px;width:92px;height:20px;background:#fff;border:1px solid #a0a0a0;"></div>
<div class="t" style="left:1304px;top:453.80px;font-size:13px;line-height:13px;color:#000;letter-spacing:-0.278px;">10.000</div>
<div class="r" style="left:1390px;top:451px;width:92px;height:20px;background:#fff;border:1px solid #a0a0a0;"></div>
<div class="t" style="left:1395px;top:453.80px;font-size:13px;line-height:13px;color:#000;letter-spacing:-0.278px;">33.000</div>
<div class="r" style="left:1481px;top:451px;width:92px;height:20px;background:#fff;border:1px solid #a0a0a0;"></div>
<div class="t" style="left:1486px;top:453.80px;font-size:13px;line-height:13px;color:#000;letter-spacing:-0.278px;">12.000</div>
<div class="r" style="left:790px;top:470px;width:54px;height:20px;background:#f0f0f0;border:1px dotted #000;"></div>
<div class="t" style="left:796px;top:472.80px;font-size:13px;line-height:13px;color:#000;">5</div>
<div class="r" style="left:844px;top:470px;width:729px;height:20px;background:#000;"></div>
<div class="r" style="left:934px;top:470px;width:1px;height:20px;background:#404040;"></div>
<div class="r" style="left:1025px;top:470px;width:1px;height:20px;background:#404040;"></div>
<div class="r" style="left:1116px;top:470px;width:1px;height:20px;background:#404040;"></div>
<div class="r" style="left:1207px;top:470px;width:1px;height:20px;background:#404040;"></div>
<div class="r" style="left:1298px;top:470px;width:1px;height:20px;background:#404040;"></div>
<div class="r" style="left:1389px;top:470px;width:1px;height:20px;background:#404040;"></div>
<div class="r" style="left:1480px;top:470px;width:1px;height:20px;background:#404040;"></div>
<div class="r" style="left:1572px;top:470px;width:1px;height:20px;background:#404040;"></div>
<div class="t" style="left:850px;top:370.00px;font-size:13px;line-height:13px;color:#000;font-weight:bold;letter-spacing:-0.078px;">Q1 Mass (Da)</div>
<div class="t" style="left:941px;top:370.00px;font-size:13px;line-height:13px;color:#000;font-weight:bold;letter-spacing:0.013px;">Q3 Mass (Da)</div>
<div class="t" style="left:1034px;top:370.00px;font-size:13px;line-height:13px;color:#000;font-weight:bold;letter-spacing:0.137px;">Time (msec)</div>
<div class="t" style="left:1157px;top:370.00px;font-size:13px;line-height:13px;color:#000;font-weight:bold;letter-spacing:-0.500px;">ID</div>
<div class="t" style="left:1225px;top:370.00px;font-size:13px;line-height:13px;color:#000;font-weight:bold;letter-spacing:-0.104px;">DP (volts)</div>
<div class="t" style="left:1317px;top:370.00px;font-size:13px;line-height:13px;color:#000;font-weight:bold;letter-spacing:-0.080px;">EP (volts)</div>
<div class="t" style="left:1408px;top:370.00px;font-size:13px;line-height:13px;color:#000;font-weight:bold;letter-spacing:-0.186px;">CE (volts)</div>
<div class="t" style="left:1494px;top:370.00px;font-size:13px;line-height:13px;color:#000;font-weight:bold;letter-spacing:-0.011px;">CXP (volts)</div>
</body></html>
